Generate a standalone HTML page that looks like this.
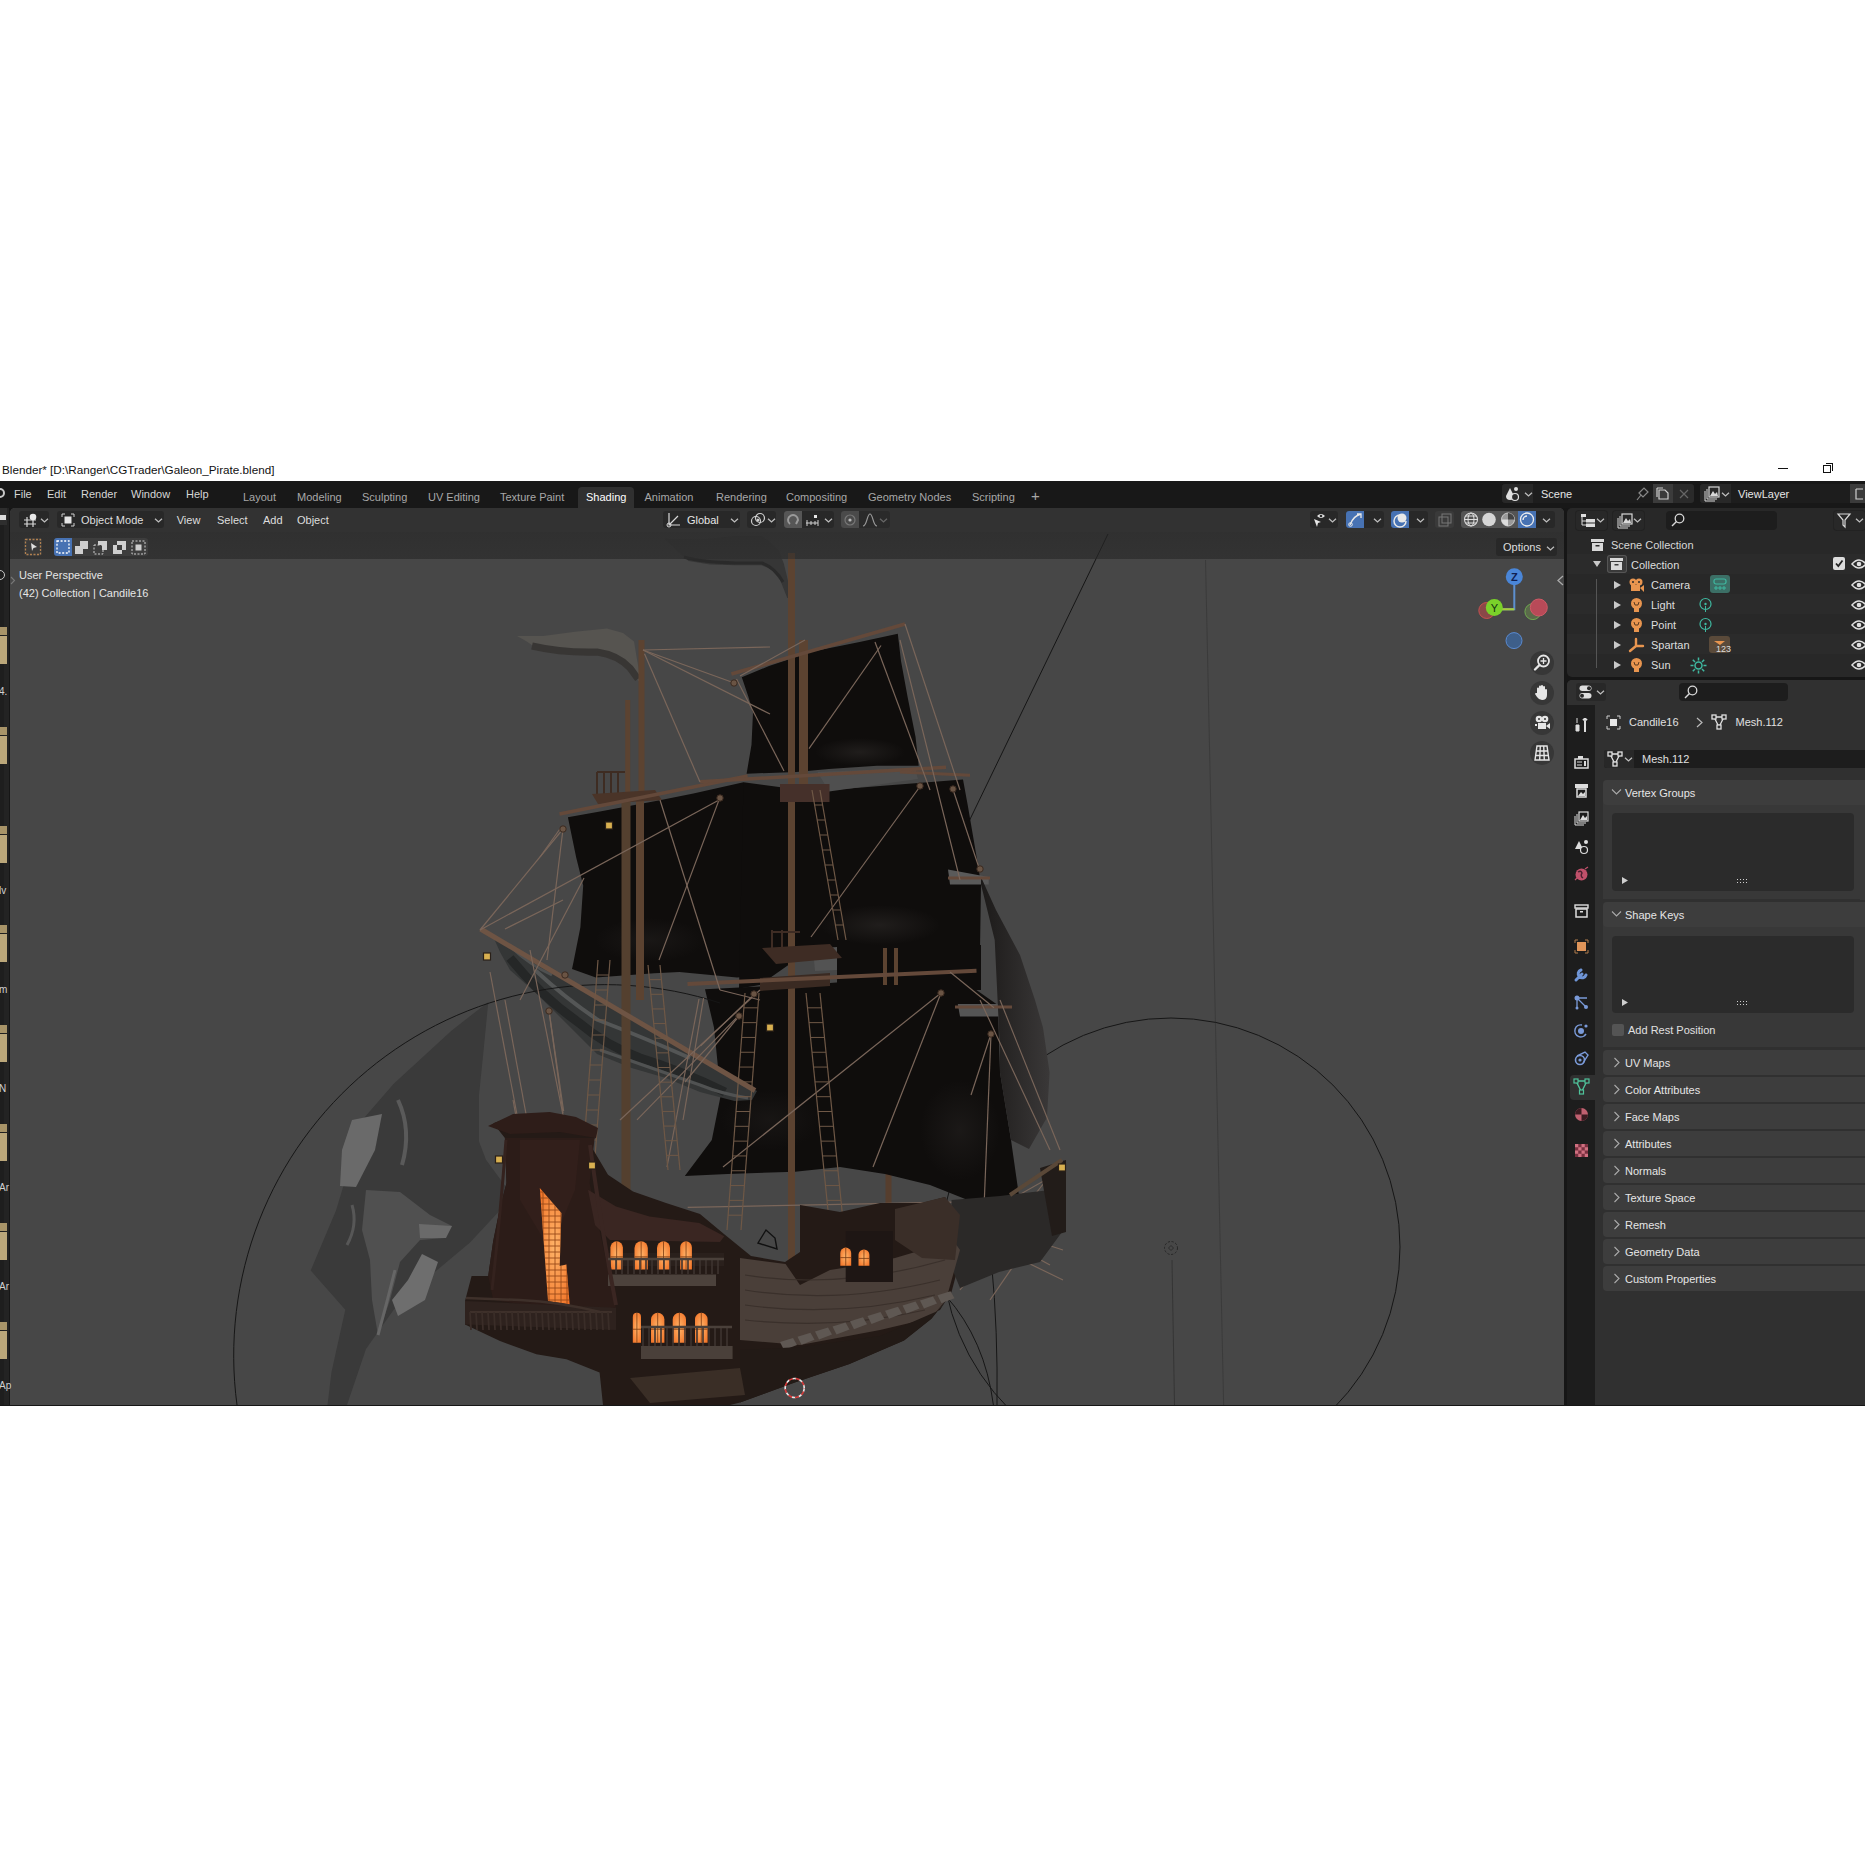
<!DOCTYPE html>
<html><head><meta charset="utf-8"><style>
html,body{margin:0;padding:0;}
body{width:1865px;height:1865px;background:#fff;position:relative;overflow:hidden;font-family:"Liberation Sans", sans-serif;}
.t{position:absolute;white-space:nowrap;line-height:1;font-family:"Liberation Sans", sans-serif;}
.b{position:absolute;box-sizing:border-box;}
svg{position:absolute;left:0;top:0;}
</style></head><body>
<div class="t" style="left:2px;top:463.70px;font-size:11.7px;color:#111;">Blender* [D:\Ranger\CGTrader\Galeon_Pirate.blend]</div>
<div class="b" style="left:1778px;top:467.5px;width:10px;height:1.5px;background:#111;"></div>
<div class="b" style="left:1823px;top:465px;width:8px;height:8px;border:1.2px solid #111;background:#fff"></div>
<div class="b" style="left:1826px;top:463px;width:7px;height:8px;border-top:1.2px solid #111;border-right:1.2px solid #111"></div>
<div class="b" style="left:0px;top:481px;width:1865px;height:925px;background:#161616;"></div>
<div class="b" style="left:0px;top:481px;width:1865px;height:27px;background:#181818;"></div>
<div class="t" style="left:14px;top:488.69px;font-size:11px;color:#d6d6d6;">File</div>
<div class="t" style="left:47px;top:488.69px;font-size:11px;color:#d6d6d6;">Edit</div>
<div class="t" style="left:81px;top:488.69px;font-size:11px;color:#d6d6d6;">Render</div>
<div class="t" style="left:131px;top:488.69px;font-size:11px;color:#d6d6d6;">Window</div>
<div class="t" style="left:186px;top:488.69px;font-size:11px;color:#d6d6d6;">Help</div>
<div class="b" style="left:578px;top:487px;width:56px;height:21px;background:#303030;border-radius:4px 4px 0 0"></div>
<div class="t" style="left:243px;top:492.19px;font-size:11px;color:#a8a8a8;">Layout</div>
<div class="t" style="left:297px;top:492.19px;font-size:11px;color:#a8a8a8;">Modeling</div>
<div class="t" style="left:362px;top:492.19px;font-size:11px;color:#a8a8a8;">Sculpting</div>
<div class="t" style="left:428px;top:492.19px;font-size:11px;color:#a8a8a8;">UV Editing</div>
<div class="t" style="left:500px;top:492.19px;font-size:11px;color:#a8a8a8;">Texture Paint</div>
<div class="t" style="left:586px;top:492.19px;font-size:11px;color:#ffffff;">Shading</div>
<div class="t" style="left:644.5px;top:492.19px;font-size:11px;color:#a8a8a8;">Animation</div>
<div class="t" style="left:716px;top:492.19px;font-size:11px;color:#a8a8a8;">Rendering</div>
<div class="t" style="left:786px;top:492.19px;font-size:11px;color:#a8a8a8;">Compositing</div>
<div class="t" style="left:868px;top:492.19px;font-size:11px;color:#a8a8a8;">Geometry Nodes</div>
<div class="t" style="left:972px;top:492.19px;font-size:11px;color:#a8a8a8;">Scripting</div>
<div class="t" style="left:1031px;top:488.30px;font-size:15px;color:#a8a8a8;">+</div>
<div class="b" style="left:10px;top:508px;width:1554px;height:897px;background:#474747;border-radius:5px 5px 0 0"></div>
<div class="b" style="left:10px;top:508px;width:1554px;height:24px;background:#323232;border-radius:5px 5px 0 0"></div>
<div class="b" style="left:10px;top:532px;width:1554px;height:27px;background:#3a3a3a;"></div>
<div class="b" style="left:0px;top:508px;width:9px;height:897px;background:#232323;"></div>
<div class="b" style="left:0px;top:508px;width:4px;height:897px;background:#1e1e1e;"></div>
<div class="b" style="left:0px;top:627px;width:7px;height:8px;background:#a89468;"></div>
<div class="b" style="left:0px;top:636px;width:7px;height:28px;background:#bba77a;"></div>
<div class="b" style="left:0px;top:727px;width:7px;height:8px;background:#a89468;"></div>
<div class="b" style="left:0px;top:736px;width:7px;height:28px;background:#bba77a;"></div>
<div class="b" style="left:0px;top:826px;width:7px;height:8px;background:#a89468;"></div>
<div class="b" style="left:0px;top:835px;width:7px;height:28px;background:#bba77a;"></div>
<div class="b" style="left:0px;top:925px;width:7px;height:8px;background:#a89468;"></div>
<div class="b" style="left:0px;top:934px;width:7px;height:28px;background:#bba77a;"></div>
<div class="b" style="left:0px;top:1025px;width:7px;height:8px;background:#a89468;"></div>
<div class="b" style="left:0px;top:1034px;width:7px;height:28px;background:#bba77a;"></div>
<div class="b" style="left:0px;top:1124px;width:7px;height:8px;background:#a89468;"></div>
<div class="b" style="left:0px;top:1133px;width:7px;height:28px;background:#bba77a;"></div>
<div class="b" style="left:0px;top:1223px;width:7px;height:8px;background:#a89468;"></div>
<div class="b" style="left:0px;top:1232px;width:7px;height:28px;background:#bba77a;"></div>
<div class="b" style="left:0px;top:1322px;width:7px;height:8px;background:#a89468;"></div>
<div class="b" style="left:0px;top:1331px;width:7px;height:28px;background:#bba77a;"></div>
<div class="t" style="left:-1px;top:686.54px;font-size:10px;color:#d0d0d0;">4.</div>
<div class="t" style="left:-1px;top:885.54px;font-size:10px;color:#d0d0d0;">lv</div>
<div class="t" style="left:-1px;top:984.54px;font-size:10px;color:#d0d0d0;">m</div>
<div class="t" style="left:-1px;top:1083.54px;font-size:10px;color:#d0d0d0;">N</div>
<div class="t" style="left:-1px;top:1182.54px;font-size:10px;color:#d0d0d0;">Ar</div>
<div class="t" style="left:-1px;top:1281.54px;font-size:10px;color:#d0d0d0;">Ar</div>
<div class="t" style="left:-1px;top:1380.54px;font-size:10px;color:#d0d0d0;">Ap</div>
<div class="b" style="left:0px;top:508px;width:7px;height:17px;background:#2e2e2e;"></div>
<div class="b" style="left:0px;top:515px;width:6px;height:5px;background:#dcdcdc;"></div>
<div class="b" style="left:-5px;top:488px;width:10px;height:10px;border:2px solid #c8c8c8;border-radius:50%"></div>
<div class="b" style="left:-5px;top:570px;width:10px;height:10px;border:1.5px solid #c8c8c8;border-radius:50%"></div>
<div class="b" style="left:19px;top:511px;width:30px;height:17px;background:#282828;border-radius:3px;"></div>
<svg style="left:22px;top:512px;" width="18" height="16" viewBox="0 0 18 16"><path d="M2 8 H14 M2 12 H14 M5 5 V15 M11 5 V15" stroke="#d8d8d8" stroke-width="1.2" fill="none"/><circle cx="11" cy="5" r="3.3" fill="#e8e8e8"/></svg>
<svg style="left:39.5px;top:516.5px" width="9" height="7" viewBox="0 0 9 7"><path d="M1 1.75 L4.5 4.8999999999999995 L8 1.75" fill="none" stroke="#bdbdbd" stroke-width="1.3"/></svg>
<div class="b" style="left:57px;top:511px;width:107px;height:17px;background:#282828;border-radius:3px;"></div>
<svg style="left:60px;top:512px;" width="16" height="16" viewBox="0 0 16 16"><path d="M2 5 V2 H5 M11 2 H14 V5 M14 11 V14 H11 M5 14 H2 V11" stroke="#cfcfcf" stroke-width="1" fill="none"/><rect x="4.5" y="4.5" width="7" height="7" fill="#e6e6e6"/></svg>
<div class="t" style="left:81px;top:514.69px;font-size:11px;color:#dedede;">Object Mode</div>
<svg style="left:153.5px;top:516.5px" width="9" height="7" viewBox="0 0 9 7"><path d="M1 1.75 L4.5 4.8999999999999995 L8 1.75" fill="none" stroke="#bdbdbd" stroke-width="1.3"/></svg>
<div class="t" style="left:176.7px;top:514.69px;font-size:11px;color:#dedede;">View</div>
<div class="t" style="left:217px;top:514.69px;font-size:11px;color:#dedede;">Select</div>
<div class="t" style="left:263px;top:514.69px;font-size:11px;color:#dedede;">Add</div>
<div class="t" style="left:297px;top:514.69px;font-size:11px;color:#dedede;">Object</div>
<div class="b" style="left:663px;top:511px;width:77px;height:17px;background:#282828;border-radius:3px;"></div>
<svg style="left:665px;top:511px;" width="18" height="18" viewBox="0 0 18 18"><path d="M4 2 V14 H15 M4 14 L13 5" stroke="#d8d8d8" stroke-width="1.2" fill="none"/><circle cx="4" cy="14" r="2" fill="none" stroke="#d8d8d8"/></svg>
<div class="t" style="left:687px;top:514.69px;font-size:11px;color:#e6e6e6;">Global</div>
<svg style="left:729.5px;top:516.5px" width="9" height="7" viewBox="0 0 9 7"><path d="M1 1.75 L4.5 4.8999999999999995 L8 1.75" fill="none" stroke="#bdbdbd" stroke-width="1.3"/></svg>
<div class="b" style="left:747px;top:511px;width:29px;height:17px;background:#282828;border-radius:3px;"></div>
<svg style="left:749px;top:512px;" width="18" height="16" viewBox="0 0 18 16"><circle cx="7" cy="9" r="4.5" fill="none" stroke="#d0d0d0" stroke-width="1.2"/><circle cx="11" cy="6" r="4.5" fill="none" stroke="#d0d0d0" stroke-width="1.2"/><circle cx="9" cy="8" r="1.5" fill="#d0d0d0"/></svg>
<svg style="left:766.5px;top:516.5px" width="9" height="7" viewBox="0 0 9 7"><path d="M1 1.75 L4.5 4.8999999999999995 L8 1.75" fill="none" stroke="#bdbdbd" stroke-width="1.3"/></svg>
<div class="b" style="left:784px;top:511px;width:50px;height:17px;background:#282828;border-radius:3px;"></div>
<div class="b" style="left:784px;top:511px;width:18px;height:17px;background:#565656;border-radius:3px 0 0 3px"></div>
<svg style="left:786px;top:512px;" width="16" height="16" viewBox="0 0 16 16"><path d="M4 12 A5 5 0 1 1 12 8 L10 12" fill="none" stroke="#9a9a9a" stroke-width="2"/></svg>
<svg style="left:804px;top:512px;" width="20" height="16" viewBox="0 0 20 16"><path d="M2 11 H14 M3 8 V14 M7 9 V13 M11 9 V13 M14 8 V14" stroke="#cfcfcf" stroke-width="1" fill="none"/><rect x="10" y="3" width="3" height="3" fill="#e8e8e8"/></svg>
<svg style="left:823.5px;top:516.5px" width="9" height="7" viewBox="0 0 9 7"><path d="M1 1.75 L4.5 4.8999999999999995 L8 1.75" fill="none" stroke="#bdbdbd" stroke-width="1.3"/></svg>
<div class="b" style="left:841px;top:511px;width:49px;height:17px;background:#2a2a2a;border-radius:3px;"></div>
<div class="b" style="left:841px;top:511px;width:18px;height:17px;background:#4a4a4a;border-radius:3px 0 0 3px"></div>
<svg style="left:843px;top:512px;" width="16" height="16" viewBox="0 0 16 16"><circle cx="7" cy="8" r="5" fill="none" stroke="#777" stroke-width="1.2"/><circle cx="7" cy="8" r="1.6" fill="#bbb"/></svg>
<svg style="left:862px;top:512px;" width="16" height="16" viewBox="0 0 16 16"><path d="M1 14 C5 14 5 2 8 2 C11 2 11 14 15 14" fill="none" stroke="#999" stroke-width="1.2"/></svg>
<svg style="left:878.5px;top:516.5px" width="9" height="7" viewBox="0 0 9 7"><path d="M1 1.75 L4.5 4.8999999999999995 L8 1.75" fill="none" stroke="#666" stroke-width="1.3"/></svg>
<div class="b" style="left:1310px;top:511px;width:28px;height:17px;background:#282828;border-radius:3px;"></div>
<svg style="left:1311px;top:511px;" width="18" height="18" viewBox="0 0 18 18"><path d="M6 5 Q10 1 14 5 Q10 9 6 5Z" fill="#e6e6e6"/><circle cx="10" cy="5" r="1.3" fill="#282828"/><path d="M3 8 L10 11 L7 12 L6 16Z" fill="#e6e6e6"/></svg>
<svg style="left:1327.5px;top:516.5px" width="9" height="7" viewBox="0 0 9 7"><path d="M1 1.75 L4.5 4.8999999999999995 L8 1.75" fill="none" stroke="#bdbdbd" stroke-width="1.3"/></svg>
<div class="b" style="left:1346px;top:511px;width:38px;height:17px;background:#282828;border-radius:3px;"></div>
<div class="b" style="left:1346px;top:511px;width:18px;height:17px;background:#4772b3;border-radius:3px 0 0 3px"></div>
<svg style="left:1347px;top:511px;" width="17" height="17" viewBox="0 0 17 17"><path d="M3 14 Q6 5 14 3 M10 3 H14 V7" fill="none" stroke="#e8e8e8" stroke-width="1.3"/><circle cx="3.5" cy="13.5" r="1.8" fill="none" stroke="#e8e8e8"/></svg>
<svg style="left:1372.5px;top:516.5px" width="9" height="7" viewBox="0 0 9 7"><path d="M1 1.75 L4.5 4.8999999999999995 L8 1.75" fill="none" stroke="#bdbdbd" stroke-width="1.3"/></svg>
<div class="b" style="left:1391px;top:511px;width:37px;height:17px;background:#282828;border-radius:3px;"></div>
<div class="b" style="left:1391px;top:511px;width:18px;height:17px;background:#4772b3;border-radius:3px 0 0 3px"></div>
<svg style="left:1392px;top:511px;" width="17" height="17" viewBox="0 0 17 17"><circle cx="10" cy="7" r="4.5" fill="#e8e8e8"/><path d="M8 4 A6 6 0 1 0 14 10" fill="none" stroke="#e8e8e8" stroke-width="1.5"/></svg>
<svg style="left:1415.5px;top:516.5px" width="9" height="7" viewBox="0 0 9 7"><path d="M1 1.75 L4.5 4.8999999999999995 L8 1.75" fill="none" stroke="#bdbdbd" stroke-width="1.3"/></svg>
<div class="b" style="left:1435px;top:511px;width:19px;height:17px;background:#3a3a3a;border-radius:3px;"></div>
<svg style="left:1437px;top:512px;" width="16" height="16" viewBox="0 0 16 16"><rect x="2" y="5" width="9" height="9" fill="none" stroke="#777"/><rect x="5" y="2" width="9" height="9" fill="none" stroke="#777"/></svg>
<div class="b" style="left:1461px;top:511px;width:94px;height:17px;background:#282828;border-radius:3px;"></div>
<div class="b" style="left:1461px;top:511px;width:57px;height:17px;background:#545454;border-radius:3px 0 0 3px"></div>
<div class="b" style="left:1518px;top:511px;width:18px;height:17px;background:#4772b3;"></div>
<svg style="left:1462px;top:511px;" width="18" height="17" viewBox="0 0 18 17"><circle cx="9" cy="8.5" r="6.5" fill="none" stroke="#ddd" stroke-width="1.1"/><ellipse cx="9" cy="8.5" rx="3" ry="6.5" fill="none" stroke="#ddd" stroke-width="1"/><path d="M2.5 8.5 H15.5 M3.5 5 H14.5 M3.5 12 H14.5" stroke="#ddd" stroke-width="1"/></svg>
<svg style="left:1480px;top:511px;" width="18" height="17" viewBox="0 0 18 17"><circle cx="9" cy="8.5" r="6.8" fill="#d6d6d6"/></svg>
<svg style="left:1499px;top:511px;" width="18" height="17" viewBox="0 0 18 17"><circle cx="9" cy="8.5" r="6.5" fill="#999" stroke="#ccc"/><path d="M9 2 A6.5 6.5 0 0 1 15.5 8.5 H9Z" fill="#444"/><path d="M9 8.5 V15 A6.5 6.5 0 0 1 2.5 8.5Z" fill="#ddd"/></svg>
<svg style="left:1518px;top:511px;" width="18" height="17" viewBox="0 0 18 17"><circle cx="9" cy="8.5" r="6.5" fill="none" stroke="#eee" stroke-width="1.3"/><path d="M5 9 A4 4 0 0 1 9 5" fill="none" stroke="#eee" stroke-width="1.3"/></svg>
<svg style="left:1541.5px;top:516.5px" width="9" height="7" viewBox="0 0 9 7"><path d="M1 1.75 L4.5 4.8999999999999995 L8 1.75" fill="none" stroke="#bdbdbd" stroke-width="1.3"/></svg>
<svg style="left:0px;top:0px;" width="1865" height="1865" viewBox="0 0 1865 1865"><defs><clipPath id="vp"><rect x="10" y="532" width="1554" height="873"/></clipPath><linearGradient id="sailg" x1="0" y1="0" x2="0" y2="1"><stop offset="0" stop-color="#100e0d"/><stop offset="0.7" stop-color="#0d0b0a"/><stop offset="1" stop-color="#1a1716"/></linearGradient><radialGradient id="win" cx="0.5" cy="0.5" r="0.75"><stop offset="0" stop-color="#ffb56a"/><stop offset="1" stop-color="#f06a1e"/></radialGradient><linearGradient id="flagg" x1="0" y1="0" x2="0" y2="1"><stop offset="0" stop-color="#4a4a4a"/><stop offset="0.55" stop-color="#3e3e3e"/><stop offset="1" stop-color="#2c2c2c"/></linearGradient><linearGradient id="lat" x1="0" y1="0" x2="1" y2="0"><stop offset="0" stop-color="#1c1a19"/><stop offset="1" stop-color="#3a3838"/></linearGradient></defs><g clip-path="url(#vp)"><line x1="1205.5" y1="560" x2="1223.7" y2="1408" stroke="#3b3b3b" stroke-width="1" /><circle cx="1171" cy="1247" r="229" fill="none" stroke="#161616" stroke-width="1"/><line x1="1108" y1="534" x2="960" y2="840" stroke="#161616" stroke-width="1" /><circle cx="1171" cy="1248" r="6.5" fill="none" stroke="#262626" stroke-width="1" stroke-dasharray="2.2 1.6"/><path d="M1168.5 1248 L1171 1245.5 L1173.5 1248 L1171 1250.5Z" fill="none" stroke="#262626" stroke-width="0.8" /><line x1="1172" y1="1260" x2="1174.5" y2="1405" stroke="#353535" stroke-width="1" /><path d="M946 1296 Q985 1340 993.4 1405" fill="none" stroke="#161616" stroke-width="1" /><path d="M991.6 1264 Q998 1330 997 1405" fill="none" stroke="#161616" stroke-width="1" /><polygon points="664.6,538.7 701.5,539.6 735.8,536.0 761.5,536.0 770.0,542.0 778.7,550.7 783.8,563.6 789.0,585.0 790.7,598.0 787.3,598.0 780.4,580.8 771.8,569.6 761.5,565.3 735.8,565.3 710.0,564.5 688.6,561.0 680.0,553.3" fill="#363636" /><path d="M684 557 Q700 562 735 563 L762 563 Q775 568 783 582" fill="none" stroke="#2a2a2a" stroke-width="3" /><polygon points="517.0,636.0 543.0,636.0 575.0,631.8 607.0,628.6 623.0,632.9 634.0,641.4 639.4,673.6 641.5,682.0 638.3,681.0 628.7,665.0 618.0,655.4 596.5,653.2 564.3,654.3 537.5,649.0 526.8,641.4" fill="#565450" /><path d="M532 646 Q562 653 597 652 Q618 655 630 668 L638 679" fill="none" stroke="#383634" stroke-width="7" /><polygon points="488.3,1001.9 483.7,1049.2 479.0,1095.3 479.0,1141.4 486.0,1159.8 511.3,1194.4 497.5,1212.9 469.8,1242.8 428.3,1277.4 393.7,1309.7 366.0,1348.9 345.3,1410.0 326.9,1410.0 331.5,1372.0 345.3,1309.7 310.7,1270.5 336.0,1210.5 363.8,1118.3 393.7,1083.7 451.4,1030.7" fill="#3a3a3a" /><polygon points="352.0,1120.0 382.0,1114.0 375.0,1150.0 356.0,1187.0 340.0,1186.0 342.0,1150.0" fill="#6a6a6a" /><polygon points="422.0,1254.0 438.0,1262.0 425.0,1300.0 398.0,1316.0 392.0,1300.0 408.0,1280.0" fill="#6e6e6e" /><polygon points="366.0,1190.0 400.0,1192.0 430.0,1215.0 452.0,1226.0 445.0,1238.0 420.0,1240.0 400.0,1262.0 390.0,1300.0 378.0,1335.0 372.0,1300.0 370.0,1260.0 362.0,1230.0" fill="#505050" /><polygon points="419.0,1224.0 452.0,1226.0 446.0,1238.0 420.0,1238.0" fill="#6a6a6a" /><path d="M398 1100 Q412 1130 402 1165" fill="none" stroke="#5a5a5a" stroke-width="4" /><path d="M352 1205 Q358 1225 347 1245" fill="none" stroke="#575757" stroke-width="3" /><path d="M395 1270 Q385 1310 378 1335" fill="none" stroke="#666" stroke-width="3" /><polygon points="741.8,677.2 769.0,666.0 812.6,651.5 860.8,641.8 897.8,633.8 901.0,661.0 907.5,696.5 915.5,736.7 918.7,765.7 877.0,765.7 828.7,769.0 796.5,772.0 746.6,773.7 751.5,744.8 753.0,712.6 748.3,696.5" fill="#0f0d0c" /><polygon points="567.9,817.2 600.0,811.6 658.5,800.4 693.4,793.5 743.5,782.3 760.0,800.0 760.0,976.0 737.0,977.5 679.4,972.0 654.3,973.3 595.8,977.5 572.0,969.0 573.5,962.1 580.4,927.3 583.2,885.5 576.2,857.6" fill="#0f0d0c" /><polygon points="743.5,782.3 813.0,791.5 880.0,786.0 963.0,779.5 967.7,805.0 978.0,865.0 981.0,884.6 979.7,970.0 957.0,955.0 900.0,950.0 837.0,949.0 813.0,947.7 760.0,985.0 739.0,988.6" fill="#0f0d0c" /><line x1="888.5" y1="1000" x2="888.5" y2="1218" stroke="#563e2e" stroke-width="6" /><polygon points="705.0,989.3 830.0,983.0 952.8,973.5 997.8,1005.0 1000.0,1072.6 1011.0,1140.0 1020.0,1203.0 975.3,1203.0 930.0,1185.0 885.0,1174.0 840.0,1167.0 795.0,1171.7 727.6,1174.0 684.8,1176.0 711.8,1140.0 720.8,1095.0 714.0,1027.6" fill="#0f0d0c" /><polygon points="837.0,945.0 981.0,945.0 981.0,990.0 837.0,990.0" fill="#0f0d0c" /><defs><radialGradient id="sheen" cx="0.5" cy="0.5" r="0.5"><stop offset="0" stop-color="#3a3634" stop-opacity="0.4"/><stop offset="1" stop-color="#3a3634" stop-opacity="0"/></radialGradient></defs><ellipse cx="860" cy="752" rx="45" ry="14" fill="url(#sheen)"/><ellipse cx="880" cy="925" rx="60" ry="20" fill="url(#sheen)"/><ellipse cx="650" cy="940" rx="55" ry="22" fill="url(#sheen)" opacity="0.6"/><ellipse cx="960" cy="1130" rx="40" ry="50" fill="url(#sheen)" opacity="0.7"/><ellipse cx="770" cy="1120" rx="50" ry="30" fill="url(#sheen)" opacity="0.5"/><polygon points="817.5,772.0 915.0,768.0 918.0,779.0 829.0,791.5" fill="#4f4f4f" /><polygon points="813.0,949.0 837.0,947.0 837.0,970.0 815.0,971.0" fill="#535353" /><polygon points="948.0,869.6 988.7,877.0 988.7,884.6 950.0,884.6" fill="#5a5a5a" /><polygon points="957.8,1004.0 1008.0,1004.0 1010.7,1016.5 960.0,1016.5" fill="#555555" /><polygon points="981.0,877.0 996.0,910.0 1020.0,955.0 1035.0,1000.0 1043.0,1027.6 1049.6,1072.6 1047.0,1117.6 1029.0,1149.0 1011.0,1140.0 1000.0,1072.6 1000.0,1050.0 994.7,940.0 981.0,884.6" fill="url(#lat)" /><polygon points="492.0,934.0 560.0,974.0 620.0,1010.0 680.0,1046.0 757.0,1091.0 752.0,1100.0 734.5,1101.0 700.0,1092.0 666.0,1078.0 631.6,1068.0 597.0,1054.0 563.0,1020.0 537.0,994.0 510.0,970.0 500.0,952.0" fill="#343636" /><path d="M510 958 Q540 995 578 1022 Q605 1045 640 1058 Q680 1070 725 1092" fill="none" stroke="#252727" stroke-width="9" /><path d="M535 970 Q565 998 598 1020 Q640 1036 690 1058" fill="none" stroke="#545656" stroke-width="4" /><path d="M600 1050 Q640 1064 700 1085 Q722 1094 748 1098" fill="none" stroke="#505252" stroke-width="3" /><path d="M512 948 Q530 965 552 975" fill="none" stroke="#4e5050" stroke-width="3" /><path d="M237 1405 A371 371 0 0 1 720 1003" fill="none" stroke="#161616" stroke-width="1" /><line x1="791.5" y1="553" x2="791.5" y2="1264" stroke="#5c4331" stroke-width="7" /><line x1="803.5" y1="640" x2="803.5" y2="790" stroke="#5c4331" stroke-width="9" /><line x1="641.5" y1="640" x2="641.5" y2="800" stroke="#5c4331" stroke-width="6" /><line x1="627.7" y1="700" x2="627.7" y2="800" stroke="#5c4331" stroke-width="5" /><line x1="626" y1="800" x2="626" y2="1250" stroke="#54402f" stroke-width="9" /><line x1="640" y1="800" x2="640" y2="1000" stroke="#5c4331" stroke-width="8" /><line x1="885" y1="948" x2="885" y2="985" stroke="#5c4331" stroke-width="4" /><line x1="896" y1="948" x2="896" y2="985" stroke="#5c4331" stroke-width="4" /><path d="M597 772 H625 M597 772 V796 M604 772 V796 M611 772 V796 M618 772 V796" fill="none" stroke="#3e2c22" stroke-width="2" /><polygon points="592.0,794.0 655.0,790.0 662.0,800.0 598.0,804.0" fill="#4a3428" /><polygon points="780.0,784.0 829.5,784.0 829.5,802.0 780.0,802.0" fill="#45302a" /><polygon points="762.0,948.0 830.0,944.0 842.0,958.0 776.0,964.0" fill="#3e2c24" /><path d="M772 930 V950 M782 930 V950 M772 932 H800" fill="none" stroke="#3e2c24" stroke-width="2" /><polygon points="760.0,978.0 830.0,973.0 830.0,986.0 760.0,991.0" fill="#3a2a22" /><line x1="731.4" y1="674" x2="905" y2="624" stroke="#64493a" stroke-width="3.5" /><line x1="559.5" y1="814" x2="747.6" y2="776" stroke="#64493a" stroke-width="3.5" /><line x1="700" y1="781.8" x2="946" y2="767.3" stroke="#64493a" stroke-width="3.5" /><line x1="900" y1="772" x2="970" y2="775.3" stroke="#64493a" stroke-width="3" /><line x1="687.5" y1="984" x2="976.5" y2="970.8" stroke="#64493a" stroke-width="4" /><line x1="480.6" y1="929" x2="755" y2="1090.5" stroke="#6e5444" stroke-width="5" /><line x1="948" y1="878" x2="990" y2="878" stroke="#64493a" stroke-width="3" /><line x1="955" y1="1007" x2="1012" y2="1007" stroke="#64493a" stroke-width="3" /><line x1="643" y1="650" x2="734.3" y2="683" stroke="#7a665a" stroke-width="1.2" /><line x1="643" y1="650" x2="770" y2="647" stroke="#7a665a" stroke-width="1.2" /><line x1="643" y1="650" x2="770" y2="714" stroke="#7a665a" stroke-width="1.2" /><line x1="644.5" y1="653.8" x2="700" y2="782" stroke="#7a665a" stroke-width="1.2" /><line x1="881" y1="645.5" x2="809" y2="748.6" stroke="#7a665a" stroke-width="1.2" /><line x1="736.5" y1="679" x2="784" y2="771" stroke="#7a665a" stroke-width="1.2" /><line x1="719" y1="800" x2="659" y2="960" stroke="#7a665a" stroke-width="1.2" /><line x1="920" y1="786.5" x2="811" y2="937" stroke="#7a665a" stroke-width="1.2" /><line x1="953" y1="789.5" x2="979.4" y2="869" stroke="#7a665a" stroke-width="1.2" /><line x1="941" y1="993" x2="723" y2="1167" stroke="#7a665a" stroke-width="1.2" /><line x1="941" y1="993" x2="873" y2="1167" stroke="#7a665a" stroke-width="1.2" /><line x1="950" y1="972" x2="994" y2="1007.7" stroke="#7a665a" stroke-width="1.2" /><line x1="560.6" y1="828" x2="540" y2="857" stroke="#7a665a" stroke-width="1.2" /><line x1="549" y1="1010.7" x2="563.6" y2="1111" stroke="#7a665a" stroke-width="1.2" /><line x1="737.6" y1="1016.6" x2="637" y2="1119.8" stroke="#7a665a" stroke-width="1.2" /><line x1="699" y1="999" x2="667" y2="1167" stroke="#7a665a" stroke-width="1.2" /><line x1="687.7" y1="1207.4" x2="1062.8" y2="1200" stroke="#7a665a" stroke-width="1.2" /><line x1="563" y1="829" x2="547" y2="960" stroke="#7a665a" stroke-width="1.2" /><line x1="530" y1="950" x2="600" y2="1300" stroke="#7a665a" stroke-width="1.2" /><line x1="1010" y1="1200" x2="1063" y2="1170" stroke="#7a665a" stroke-width="1.2" /><line x1="513" y1="1100" x2="553" y2="1314" stroke="#7a665a" stroke-width="1.2" /><line x1="505" y1="1000" x2="540" y2="1190" stroke="#7a665a" stroke-width="1.2" /><line x1="955" y1="1230" x2="1063" y2="1230" stroke="#7a665a" stroke-width="1.2" /><line x1="1005" y1="1270" x2="1060" y2="1195" stroke="#7a665a" stroke-width="1.2" /><line x1="940" y1="1205" x2="1050" y2="1265" stroke="#7a665a" stroke-width="1.2" /><line x1="875" y1="642" x2="930" y2="790" stroke="#7a665a" stroke-width="1.2" /><line x1="584" y1="878" x2="520" y2="1000" stroke="#7a665a" stroke-width="1.2" /><line x1="600" y1="1295" x2="700" y2="1215" stroke="#7a665a" stroke-width="1.2" /><line x1="980" y1="1000" x2="1050" y2="1150" stroke="#7a665a" stroke-width="1.2" /><line x1="720" y1="990" x2="760" y2="1000" stroke="#7a665a" stroke-width="1.2" /><line x1="480" y1="930" x2="563" y2="829" stroke="#7a665a" stroke-width="1.2" /><line x1="480" y1="930" x2="719" y2="800" stroke="#7a665a" stroke-width="1.2" /><line x1="490" y1="972" x2="518" y2="1120" stroke="#7a665a" stroke-width="1.2" /><line x1="549" y1="1011" x2="563" y2="1113" stroke="#7a665a" stroke-width="1.2" /><line x1="563" y1="900" x2="505" y2="929" stroke="#7a665a" stroke-width="1.2" /><line x1="703.6" y1="998" x2="683" y2="1120" stroke="#7a665a" stroke-width="1.2" /><line x1="660" y1="800" x2="720" y2="990" stroke="#7a665a" stroke-width="1.2" /><line x1="760" y1="990" x2="620" y2="1120" stroke="#7a665a" stroke-width="1.2" /><line x1="991" y1="1034" x2="984" y2="1208" stroke="#7a665a" stroke-width="1.2" /><line x1="991" y1="1034" x2="971" y2="1095" stroke="#7a665a" stroke-width="1.2" /><line x1="754.6" y1="994" x2="700.5" y2="1046" stroke="#7a665a" stroke-width="1.2" /><line x1="739" y1="1016" x2="685" y2="1082" stroke="#7a665a" stroke-width="1.2" /><line x1="900" y1="640" x2="960" y2="880" stroke="#7a665a" stroke-width="1.2" /><line x1="805" y1="640" x2="740" y2="676" stroke="#7a665a" stroke-width="1.2" /><line x1="905" y1="624" x2="960" y2="790" stroke="#7a665a" stroke-width="1.2" /><line x1="1000" y1="1000" x2="1060" y2="1150" stroke="#7a665a" stroke-width="1.2" /><line x1="1062" y1="1160" x2="960" y2="1290" stroke="#7a665a" stroke-width="1.2" /><line x1="1062" y1="1195" x2="990" y2="1300" stroke="#7a665a" stroke-width="1.2" /><line x1="960" y1="1230" x2="1063" y2="1280" stroke="#7a665a" stroke-width="1.2" /><line x1="940" y1="1210" x2="1063" y2="1250" stroke="#7a665a" stroke-width="1.2" /><line x1="598" y1="960" x2="582" y2="1170" stroke="#6f5846" stroke-width="1.2" /><line x1="610" y1="960" x2="594" y2="1170" stroke="#6f5846" stroke-width="1.2" /><line x1="596.8571428571429" y1="975.0" x2="608.8571428571429" y2="975.0" stroke="#6f5846" stroke-width="1" /><line x1="595.7142857142857" y1="990.0" x2="607.7142857142857" y2="990.0" stroke="#6f5846" stroke-width="1" /><line x1="594.5714285714286" y1="1005.0" x2="606.5714285714286" y2="1005.0" stroke="#6f5846" stroke-width="1" /><line x1="593.4285714285714" y1="1020.0" x2="605.4285714285714" y2="1020.0" stroke="#6f5846" stroke-width="1" /><line x1="592.2857142857143" y1="1035.0" x2="604.2857142857143" y2="1035.0" stroke="#6f5846" stroke-width="1" /><line x1="591.1428571428571" y1="1050.0" x2="603.1428571428571" y2="1050.0" stroke="#6f5846" stroke-width="1" /><line x1="590.0" y1="1065.0" x2="602.0" y2="1065.0" stroke="#6f5846" stroke-width="1" /><line x1="588.8571428571429" y1="1080.0" x2="600.8571428571429" y2="1080.0" stroke="#6f5846" stroke-width="1" /><line x1="587.7142857142857" y1="1095.0" x2="599.7142857142857" y2="1095.0" stroke="#6f5846" stroke-width="1" /><line x1="586.5714285714286" y1="1110.0" x2="598.5714285714286" y2="1110.0" stroke="#6f5846" stroke-width="1" /><line x1="585.4285714285714" y1="1125.0" x2="597.4285714285714" y2="1125.0" stroke="#6f5846" stroke-width="1" /><line x1="584.2857142857143" y1="1140.0" x2="596.2857142857143" y2="1140.0" stroke="#6f5846" stroke-width="1" /><line x1="583.1428571428571" y1="1155.0" x2="595.1428571428571" y2="1155.0" stroke="#6f5846" stroke-width="1" /><line x1="648" y1="965" x2="668" y2="1170" stroke="#6f5846" stroke-width="1.2" /><line x1="660" y1="965" x2="680" y2="1170" stroke="#6f5846" stroke-width="1.2" /><line x1="649.4285714285714" y1="979.6428571428571" x2="661.4285714285714" y2="979.6428571428571" stroke="#6f5846" stroke-width="1" /><line x1="650.8571428571429" y1="994.2857142857143" x2="662.8571428571429" y2="994.2857142857143" stroke="#6f5846" stroke-width="1" /><line x1="652.2857142857143" y1="1008.9285714285714" x2="664.2857142857143" y2="1008.9285714285714" stroke="#6f5846" stroke-width="1" /><line x1="653.7142857142857" y1="1023.5714285714286" x2="665.7142857142857" y2="1023.5714285714286" stroke="#6f5846" stroke-width="1" /><line x1="655.1428571428571" y1="1038.2142857142858" x2="667.1428571428571" y2="1038.2142857142858" stroke="#6f5846" stroke-width="1" /><line x1="656.5714285714286" y1="1052.857142857143" x2="668.5714285714286" y2="1052.857142857143" stroke="#6f5846" stroke-width="1" /><line x1="658.0" y1="1067.5" x2="670.0" y2="1067.5" stroke="#6f5846" stroke-width="1" /><line x1="659.4285714285714" y1="1082.142857142857" x2="671.4285714285714" y2="1082.142857142857" stroke="#6f5846" stroke-width="1" /><line x1="660.8571428571429" y1="1096.7857142857142" x2="672.8571428571429" y2="1096.7857142857142" stroke="#6f5846" stroke-width="1" /><line x1="662.2857142857143" y1="1111.4285714285716" x2="674.2857142857143" y2="1111.4285714285716" stroke="#6f5846" stroke-width="1" /><line x1="663.7142857142857" y1="1126.0714285714284" x2="675.7142857142857" y2="1126.0714285714284" stroke="#6f5846" stroke-width="1" /><line x1="665.1428571428571" y1="1140.7142857142858" x2="677.1428571428571" y2="1140.7142857142858" stroke="#6f5846" stroke-width="1" /><line x1="666.5714285714286" y1="1155.357142857143" x2="678.5714285714286" y2="1155.357142857143" stroke="#6f5846" stroke-width="1" /><line x1="745" y1="993" x2="727" y2="1230" stroke="#6f5846" stroke-width="1.2" /><line x1="759" y1="993" x2="741" y2="1230" stroke="#6f5846" stroke-width="1.2" /><line x1="743.875" y1="1007.8125" x2="757.875" y2="1007.8125" stroke="#6f5846" stroke-width="1" /><line x1="742.75" y1="1022.625" x2="756.75" y2="1022.625" stroke="#6f5846" stroke-width="1" /><line x1="741.625" y1="1037.4375" x2="755.625" y2="1037.4375" stroke="#6f5846" stroke-width="1" /><line x1="740.5" y1="1052.25" x2="754.5" y2="1052.25" stroke="#6f5846" stroke-width="1" /><line x1="739.375" y1="1067.0625" x2="753.375" y2="1067.0625" stroke="#6f5846" stroke-width="1" /><line x1="738.25" y1="1081.875" x2="752.25" y2="1081.875" stroke="#6f5846" stroke-width="1" /><line x1="737.125" y1="1096.6875" x2="751.125" y2="1096.6875" stroke="#6f5846" stroke-width="1" /><line x1="736.0" y1="1111.5" x2="750.0" y2="1111.5" stroke="#6f5846" stroke-width="1" /><line x1="734.875" y1="1126.3125" x2="748.875" y2="1126.3125" stroke="#6f5846" stroke-width="1" /><line x1="733.75" y1="1141.125" x2="747.75" y2="1141.125" stroke="#6f5846" stroke-width="1" /><line x1="732.625" y1="1155.9375" x2="746.625" y2="1155.9375" stroke="#6f5846" stroke-width="1" /><line x1="731.5" y1="1170.75" x2="745.5" y2="1170.75" stroke="#6f5846" stroke-width="1" /><line x1="730.375" y1="1185.5625" x2="744.375" y2="1185.5625" stroke="#6f5846" stroke-width="1" /><line x1="729.25" y1="1200.375" x2="743.25" y2="1200.375" stroke="#6f5846" stroke-width="1" /><line x1="728.125" y1="1215.1875" x2="742.125" y2="1215.1875" stroke="#6f5846" stroke-width="1" /><line x1="806" y1="993" x2="830" y2="1230" stroke="#6f5846" stroke-width="1.2" /><line x1="820" y1="993" x2="844" y2="1230" stroke="#6f5846" stroke-width="1.2" /><line x1="807.5" y1="1007.8125" x2="821.5" y2="1007.8125" stroke="#6f5846" stroke-width="1" /><line x1="809.0" y1="1022.625" x2="823.0" y2="1022.625" stroke="#6f5846" stroke-width="1" /><line x1="810.5" y1="1037.4375" x2="824.5" y2="1037.4375" stroke="#6f5846" stroke-width="1" /><line x1="812.0" y1="1052.25" x2="826.0" y2="1052.25" stroke="#6f5846" stroke-width="1" /><line x1="813.5" y1="1067.0625" x2="827.5" y2="1067.0625" stroke="#6f5846" stroke-width="1" /><line x1="815.0" y1="1081.875" x2="829.0" y2="1081.875" stroke="#6f5846" stroke-width="1" /><line x1="816.5" y1="1096.6875" x2="830.5" y2="1096.6875" stroke="#6f5846" stroke-width="1" /><line x1="818.0" y1="1111.5" x2="832.0" y2="1111.5" stroke="#6f5846" stroke-width="1" /><line x1="819.5" y1="1126.3125" x2="833.5" y2="1126.3125" stroke="#6f5846" stroke-width="1" /><line x1="821.0" y1="1141.125" x2="835.0" y2="1141.125" stroke="#6f5846" stroke-width="1" /><line x1="822.5" y1="1155.9375" x2="836.5" y2="1155.9375" stroke="#6f5846" stroke-width="1" /><line x1="824.0" y1="1170.75" x2="838.0" y2="1170.75" stroke="#6f5846" stroke-width="1" /><line x1="825.5" y1="1185.5625" x2="839.5" y2="1185.5625" stroke="#6f5846" stroke-width="1" /><line x1="827.0" y1="1200.375" x2="841.0" y2="1200.375" stroke="#6f5846" stroke-width="1" /><line x1="828.5" y1="1215.1875" x2="842.5" y2="1215.1875" stroke="#6f5846" stroke-width="1" /><line x1="812" y1="790" x2="838" y2="940" stroke="#6f5846" stroke-width="1.2" /><line x1="820" y1="790" x2="846" y2="940" stroke="#6f5846" stroke-width="1.2" /><line x1="814.6" y1="805.0" x2="822.6" y2="805.0" stroke="#6f5846" stroke-width="1" /><line x1="817.2" y1="820.0" x2="825.2" y2="820.0" stroke="#6f5846" stroke-width="1" /><line x1="819.8" y1="835.0" x2="827.8" y2="835.0" stroke="#6f5846" stroke-width="1" /><line x1="822.4" y1="850.0" x2="830.4" y2="850.0" stroke="#6f5846" stroke-width="1" /><line x1="825.0" y1="865.0" x2="833.0" y2="865.0" stroke="#6f5846" stroke-width="1" /><line x1="827.6" y1="880.0" x2="835.6" y2="880.0" stroke="#6f5846" stroke-width="1" /><line x1="830.2" y1="895.0" x2="838.2" y2="895.0" stroke="#6f5846" stroke-width="1" /><line x1="832.8" y1="910.0" x2="840.8" y2="910.0" stroke="#6f5846" stroke-width="1" /><line x1="835.4" y1="925.0" x2="843.4" y2="925.0" stroke="#6f5846" stroke-width="1" /><circle cx="720" cy="798" r="3.2" fill="#6a5444" stroke="#3a2a20" stroke-width="1"/><circle cx="941" cy="993" r="3.2" fill="#6a5444" stroke="#3a2a20" stroke-width="1"/><circle cx="953" cy="789" r="3.2" fill="#6a5444" stroke="#3a2a20" stroke-width="1"/><circle cx="920" cy="786" r="3.2" fill="#6a5444" stroke="#3a2a20" stroke-width="1"/><circle cx="563" cy="829" r="3.2" fill="#6a5444" stroke="#3a2a20" stroke-width="1"/><circle cx="549" cy="1011" r="3.2" fill="#6a5444" stroke="#3a2a20" stroke-width="1"/><circle cx="739" cy="1016" r="3.2" fill="#6a5444" stroke="#3a2a20" stroke-width="1"/><circle cx="754" cy="994" r="3.2" fill="#6a5444" stroke="#3a2a20" stroke-width="1"/><circle cx="991" cy="1034" r="3.2" fill="#6a5444" stroke="#3a2a20" stroke-width="1"/><circle cx="980" cy="869" r="3.2" fill="#6a5444" stroke="#3a2a20" stroke-width="1"/><circle cx="734" cy="683" r="3.2" fill="#6a5444" stroke="#3a2a20" stroke-width="1"/><circle cx="565" cy="975" r="3.2" fill="#6a5444" stroke="#3a2a20" stroke-width="1"/><polygon points="493.2,1123.3 513.0,1116.6 549.7,1115.0 574.7,1120.0 596.3,1130.0 594.6,1138.0 591.3,1146.5 608.0,1174.8 633.0,1191.4 666.0,1203.0 700.0,1214.0 724.0,1234.0 751.0,1256.0 785.0,1262.0 800.0,1252.0 800.0,1205.0 840.0,1212.0 880.0,1203.0 922.0,1203.0 945.0,1197.0 956.0,1215.0 960.0,1260.0 951.5,1292.0 946.0,1300.4 931.4,1318.7 904.0,1340.5 849.4,1364.0 794.7,1382.5 740.0,1402.5 730.0,1405.0 603.0,1405.0 599.6,1372.6 566.4,1359.3 536.4,1354.3 500.0,1341.0 465.0,1324.4 465.0,1301.0 471.6,1276.0 488.2,1276.0 493.2,1241.0 500.0,1208.0 506.5,1183.0 504.9,1138.0" fill="#241a16" /><polygon points="951.5,1200.0 1000.0,1196.0 1050.0,1190.0 1064.0,1160.0 1066.0,1200.0 1062.0,1232.0 1040.0,1262.0 999.0,1272.0 960.0,1288.0 951.5,1267.0" fill="#2b2928" /><polygon points="1040.0,1168.0 1066.0,1160.0 1066.0,1232.0 1052.0,1236.0" fill="#221c19" /><polygon points="504.9,1138.0 594.6,1138.0 589.6,1183.0 616.0,1307.8 560.0,1310.0 493.2,1300.0 488.2,1276.0 493.2,1241.0 500.0,1208.0 506.5,1183.0" fill="#2c1c18" /><polygon points="520.0,1140.0 580.0,1140.0 575.0,1190.0 550.0,1250.0 520.0,1200.0" fill="#321f1b" /><polygon points="488.0,1126.0 513.0,1114.0 549.7,1112.0 576.0,1117.0 598.0,1128.0 596.0,1138.0 560.0,1132.0 510.0,1134.0" fill="#2e1d19" /><polygon points="588.0,1189.8 616.0,1206.4 649.5,1216.4 699.3,1223.0 724.3,1236.3 720.0,1242.0 610.0,1240.0 595.0,1225.0" fill="#3a2622" /><polygon points="740.0,1258.0 785.6,1264.0 800.0,1285.0 830.0,1270.0 849.0,1267.0 895.0,1258.0 922.0,1250.0 946.0,1230.0 960.0,1250.0 946.0,1300.0 931.0,1318.0 880.0,1330.0 800.0,1345.0 740.0,1340.0" fill="#4a3f39" /><path d="M745 1275 Q840 1290 945 1260 M745 1290 Q840 1305 940 1280 M745 1305 Q840 1318 935 1295 M745 1320 Q840 1330 925 1310" fill="none" stroke="#3a302b" stroke-width="1.2" /><polygon points="780.0,1342.0 793.0,1338.0 797.0,1345.0 784.0,1350.0" fill="#5f5853" /><polygon points="797.5,1336.8 810.5,1332.8 814.5,1339.8 801.5,1344.8" fill="#5f5853" /><polygon points="815.0,1331.6 828.0,1327.6 832.0,1334.6 819.0,1339.6" fill="#5f5853" /><polygon points="832.5,1326.4 845.5,1322.4 849.5,1329.4 836.5,1334.4" fill="#5f5853" /><polygon points="850.0,1321.2 863.0,1317.2 867.0,1324.2 854.0,1329.2" fill="#5f5853" /><polygon points="867.5,1316.0 880.5,1312.0 884.5,1319.0 871.5,1324.0" fill="#5f5853" /><polygon points="885.0,1310.8 898.0,1306.8 902.0,1313.8 889.0,1318.8" fill="#5f5853" /><polygon points="902.5,1305.6 915.5,1301.6 919.5,1308.6 906.5,1313.6" fill="#5f5853" /><polygon points="920.0,1300.4 933.0,1296.4 937.0,1303.4 924.0,1308.4" fill="#5f5853" /><polygon points="937.5,1295.2 950.5,1291.2 954.5,1298.2 941.5,1303.2" fill="#5f5853" /><polygon points="740.0,1350.0 800.0,1347.0 880.0,1336.0 940.0,1310.0 946.0,1300.4 931.4,1318.7 904.0,1340.5 849.4,1364.0 794.7,1382.5 740.0,1402.5" fill="#221a16" /><polygon points="895.0,1209.0 945.0,1197.0 960.0,1215.0 955.0,1260.0 922.0,1258.0 895.0,1240.0" fill="#3a2e28" /><polygon points="845.7,1231.0 893.0,1231.0 893.0,1282.0 845.7,1282.0" fill="#1e1614" /><line x1="1010" y1="1195" x2="1062" y2="1160" stroke="#5a4838" stroke-width="4" /><polygon points="608.0,1253.0 724.0,1253.0 724.0,1266.0 608.0,1266.0" fill="#2a201c" /><polygon points="608.0,1274.5 716.0,1274.5 716.0,1286.0 608.0,1286.0" fill="#4c423c" /><polygon points="641.0,1346.0 732.6,1346.0 732.6,1359.0 641.0,1359.0" fill="#4a403a" /><polygon points="465.0,1301.0 616.0,1307.8 616.0,1330.0 465.0,1324.4" fill="#2e221e" /><path d="M470 1312 H612" fill="none" stroke="#3e302a" stroke-width="2" /><polygon points="630.0,1378.0 740.0,1368.0 745.0,1395.0 650.0,1403.0" fill="#3a2e26" /><clipPath id="tallw"><polygon points="539.8,1188 561.4,1213 559.7,1266 566.4,1264.6 569.7,1304.5 548,1301"/></clipPath><polygon points="539.8,1188.0 561.4,1213.0 559.7,1266.0 566.4,1264.6 569.7,1304.5 548.0,1301.0" fill="url(#win)" /><g clip-path="url(#tallw)"><line x1="536" y1="1192" x2="572" y2="1192" stroke="#9a4a18" stroke-width="0.9" /><line x1="536" y1="1198" x2="572" y2="1198" stroke="#9a4a18" stroke-width="0.9" /><line x1="536" y1="1204" x2="572" y2="1204" stroke="#9a4a18" stroke-width="0.9" /><line x1="536" y1="1210" x2="572" y2="1210" stroke="#9a4a18" stroke-width="0.9" /><line x1="536" y1="1216" x2="572" y2="1216" stroke="#9a4a18" stroke-width="0.9" /><line x1="536" y1="1222" x2="572" y2="1222" stroke="#9a4a18" stroke-width="0.9" /><line x1="536" y1="1228" x2="572" y2="1228" stroke="#9a4a18" stroke-width="0.9" /><line x1="536" y1="1234" x2="572" y2="1234" stroke="#9a4a18" stroke-width="0.9" /><line x1="536" y1="1240" x2="572" y2="1240" stroke="#9a4a18" stroke-width="0.9" /><line x1="536" y1="1246" x2="572" y2="1246" stroke="#9a4a18" stroke-width="0.9" /><line x1="536" y1="1252" x2="572" y2="1252" stroke="#9a4a18" stroke-width="0.9" /><line x1="536" y1="1258" x2="572" y2="1258" stroke="#9a4a18" stroke-width="0.9" /><line x1="536" y1="1264" x2="572" y2="1264" stroke="#9a4a18" stroke-width="0.9" /><line x1="536" y1="1270" x2="572" y2="1270" stroke="#9a4a18" stroke-width="0.9" /><line x1="536" y1="1276" x2="572" y2="1276" stroke="#9a4a18" stroke-width="0.9" /><line x1="536" y1="1282" x2="572" y2="1282" stroke="#9a4a18" stroke-width="0.9" /><line x1="536" y1="1288" x2="572" y2="1288" stroke="#9a4a18" stroke-width="0.9" /><line x1="536" y1="1294" x2="572" y2="1294" stroke="#9a4a18" stroke-width="0.9" /><line x1="536" y1="1300" x2="572" y2="1300" stroke="#9a4a18" stroke-width="0.9" /><line x1="543" y1="1186" x2="543" y2="1306" stroke="#9a4a18" stroke-width="0.9" /><line x1="549" y1="1186" x2="549" y2="1306" stroke="#9a4a18" stroke-width="0.9" /><line x1="555" y1="1186" x2="555" y2="1306" stroke="#9a4a18" stroke-width="0.9" /><line x1="561" y1="1186" x2="561" y2="1306" stroke="#9a4a18" stroke-width="0.9" /><line x1="567" y1="1186" x2="567" y2="1306" stroke="#9a4a18" stroke-width="0.9" /></g><path d="M610.4 1269.5 V1247.55 A6.25 6.25 0 0 1 622.9 1247.55 V1269.5Z" fill="url(#win)" stroke="none" stroke-width="1" /><path d="M616.65 1241.3 V1269.5 M610.4 1256.81 H622.9" fill="none" stroke="#7a3a10" stroke-width="0.8" /><path d="M634.5 1269.5 V1247.9499999999998 A6.649999999999977 6.649999999999977 0 0 1 647.8 1247.9499999999998 V1269.5Z" fill="url(#win)" stroke="none" stroke-width="1" /><path d="M641.15 1241.3 V1269.5 M634.5 1256.81 H647.8" fill="none" stroke="#7a3a10" stroke-width="0.8" /><path d="M657 1269.5 V1247.8 A6.5 6.5 0 0 1 670 1247.8 V1269.5Z" fill="url(#win)" stroke="none" stroke-width="1" /><path d="M663.5 1241.3 V1269.5 M657 1256.81 H670" fill="none" stroke="#7a3a10" stroke-width="0.8" /><path d="M680.2 1269.5 V1247.1499999999999 A5.849999999999966 5.849999999999966 0 0 1 691.9 1247.1499999999999 V1269.5Z" fill="url(#win)" stroke="none" stroke-width="1" /><path d="M686.05 1241.3 V1269.5 M680.2 1256.81 H691.9" fill="none" stroke="#7a3a10" stroke-width="0.8" /><path d="M632.8 1342.7 V1316.9 A4.100000000000023 4.100000000000023 0 0 1 641 1316.9 V1342.7Z" fill="url(#win)" stroke="none" stroke-width="1" /><path d="M636.9 1312.8 V1342.7 M632.8 1329.245 H641" fill="none" stroke="#7a3a10" stroke-width="0.8" /><path d="M651 1342.7 V1319.5 A6.699999999999989 6.699999999999989 0 0 1 664.4 1319.5 V1342.7Z" fill="url(#win)" stroke="none" stroke-width="1" /><path d="M657.7 1312.8 V1342.7 M651 1329.245 H664.4" fill="none" stroke="#7a3a10" stroke-width="0.8" /><path d="M672.7 1342.7 V1319.4499999999998 A6.649999999999977 6.649999999999977 0 0 1 686 1319.4499999999998 V1342.7Z" fill="url(#win)" stroke="none" stroke-width="1" /><path d="M679.35 1312.8 V1342.7 M672.7 1329.245 H686" fill="none" stroke="#7a3a10" stroke-width="0.8" /><path d="M695 1342.7 V1319.1 A6.300000000000011 6.300000000000011 0 0 1 707.6 1319.1 V1342.7Z" fill="url(#win)" stroke="none" stroke-width="1" /><path d="M701.3 1312.8 V1342.7 M695 1329.245 H707.6" fill="none" stroke="#7a3a10" stroke-width="0.8" /><path d="M840.3 1265.8 V1253.05 A5.4500000000000455 5.4500000000000455 0 0 1 851.2 1253.05 V1265.8Z" fill="url(#win)" stroke="none" stroke-width="1" /><path d="M845.75 1247.6 V1265.8 M840.3 1257.61 H851.2" fill="none" stroke="#7a3a10" stroke-width="0.8" /><path d="M858.5 1265.8 V1254.8500000000001 A5.449999999999989 5.449999999999989 0 0 1 869.4 1254.8500000000001 V1265.8Z" fill="url(#win)" stroke="none" stroke-width="1" /><path d="M863.95 1249.4 V1265.8 M858.5 1258.42 H869.4" fill="none" stroke="#7a3a10" stroke-width="0.8" /><line x1="610" y1="1259" x2="610" y2="1274" stroke="#3e3430" stroke-width="1.6" /><line x1="616" y1="1259" x2="616" y2="1274" stroke="#3e3430" stroke-width="1.6" /><line x1="622" y1="1259" x2="622" y2="1274" stroke="#3e3430" stroke-width="1.6" /><line x1="628" y1="1259" x2="628" y2="1274" stroke="#3e3430" stroke-width="1.6" /><line x1="634" y1="1259" x2="634" y2="1274" stroke="#3e3430" stroke-width="1.6" /><line x1="640" y1="1259" x2="640" y2="1274" stroke="#3e3430" stroke-width="1.6" /><line x1="646" y1="1259" x2="646" y2="1274" stroke="#3e3430" stroke-width="1.6" /><line x1="652" y1="1259" x2="652" y2="1274" stroke="#3e3430" stroke-width="1.6" /><line x1="658" y1="1259" x2="658" y2="1274" stroke="#3e3430" stroke-width="1.6" /><line x1="664" y1="1259" x2="664" y2="1274" stroke="#3e3430" stroke-width="1.6" /><line x1="670" y1="1259" x2="670" y2="1274" stroke="#3e3430" stroke-width="1.6" /><line x1="676" y1="1259" x2="676" y2="1274" stroke="#3e3430" stroke-width="1.6" /><line x1="682" y1="1259" x2="682" y2="1274" stroke="#3e3430" stroke-width="1.6" /><line x1="688" y1="1259" x2="688" y2="1274" stroke="#3e3430" stroke-width="1.6" /><line x1="694" y1="1259" x2="694" y2="1274" stroke="#3e3430" stroke-width="1.6" /><line x1="700" y1="1259" x2="700" y2="1274" stroke="#3e3430" stroke-width="1.6" /><line x1="706" y1="1259" x2="706" y2="1274" stroke="#3e3430" stroke-width="1.6" /><line x1="712" y1="1259" x2="712" y2="1274" stroke="#3e3430" stroke-width="1.6" /><line x1="718" y1="1259" x2="718" y2="1274" stroke="#3e3430" stroke-width="1.6" /><line x1="643" y1="1327" x2="643" y2="1346" stroke="#3e3430" stroke-width="1.6" /><line x1="649" y1="1327" x2="649" y2="1346" stroke="#3e3430" stroke-width="1.6" /><line x1="655" y1="1327" x2="655" y2="1346" stroke="#3e3430" stroke-width="1.6" /><line x1="661" y1="1327" x2="661" y2="1346" stroke="#3e3430" stroke-width="1.6" /><line x1="667" y1="1327" x2="667" y2="1346" stroke="#3e3430" stroke-width="1.6" /><line x1="673" y1="1327" x2="673" y2="1346" stroke="#3e3430" stroke-width="1.6" /><line x1="679" y1="1327" x2="679" y2="1346" stroke="#3e3430" stroke-width="1.6" /><line x1="685" y1="1327" x2="685" y2="1346" stroke="#3e3430" stroke-width="1.6" /><line x1="691" y1="1327" x2="691" y2="1346" stroke="#3e3430" stroke-width="1.6" /><line x1="697" y1="1327" x2="697" y2="1346" stroke="#3e3430" stroke-width="1.6" /><line x1="703" y1="1327" x2="703" y2="1346" stroke="#3e3430" stroke-width="1.6" /><line x1="709" y1="1327" x2="709" y2="1346" stroke="#3e3430" stroke-width="1.6" /><line x1="715" y1="1327" x2="715" y2="1346" stroke="#3e3430" stroke-width="1.6" /><line x1="721" y1="1327" x2="721" y2="1346" stroke="#3e3430" stroke-width="1.6" /><line x1="727" y1="1327" x2="727" y2="1346" stroke="#3e3430" stroke-width="1.6" /><line x1="470" y1="1312" x2="471" y2="1330" stroke="#3a2d28" stroke-width="1.8" /><line x1="476" y1="1312" x2="477" y2="1330" stroke="#3a2d28" stroke-width="1.8" /><line x1="482" y1="1312" x2="483" y2="1330" stroke="#3a2d28" stroke-width="1.8" /><line x1="488" y1="1312" x2="489" y2="1330" stroke="#3a2d28" stroke-width="1.8" /><line x1="494" y1="1312" x2="495" y2="1330" stroke="#3a2d28" stroke-width="1.8" /><line x1="500" y1="1312" x2="501" y2="1330" stroke="#3a2d28" stroke-width="1.8" /><line x1="506" y1="1312" x2="507" y2="1330" stroke="#3a2d28" stroke-width="1.8" /><line x1="512" y1="1312" x2="513" y2="1330" stroke="#3a2d28" stroke-width="1.8" /><line x1="518" y1="1312" x2="519" y2="1330" stroke="#3a2d28" stroke-width="1.8" /><line x1="524" y1="1312" x2="525" y2="1330" stroke="#3a2d28" stroke-width="1.8" /><line x1="530" y1="1312" x2="531" y2="1330" stroke="#3a2d28" stroke-width="1.8" /><line x1="536" y1="1312" x2="537" y2="1330" stroke="#3a2d28" stroke-width="1.8" /><line x1="542" y1="1312" x2="543" y2="1330" stroke="#3a2d28" stroke-width="1.8" /><line x1="548" y1="1312" x2="549" y2="1330" stroke="#3a2d28" stroke-width="1.8" /><line x1="554" y1="1312" x2="555" y2="1330" stroke="#3a2d28" stroke-width="1.8" /><line x1="560" y1="1312" x2="561" y2="1330" stroke="#3a2d28" stroke-width="1.8" /><line x1="566" y1="1312" x2="567" y2="1330" stroke="#3a2d28" stroke-width="1.8" /><line x1="572" y1="1312" x2="573" y2="1330" stroke="#3a2d28" stroke-width="1.8" /><line x1="578" y1="1312" x2="579" y2="1330" stroke="#3a2d28" stroke-width="1.8" /><line x1="584" y1="1312" x2="585" y2="1330" stroke="#3a2d28" stroke-width="1.8" /><line x1="590" y1="1312" x2="591" y2="1330" stroke="#3a2d28" stroke-width="1.8" /><line x1="596" y1="1312" x2="597" y2="1330" stroke="#3a2d28" stroke-width="1.8" /><line x1="602" y1="1312" x2="603" y2="1330" stroke="#3a2d28" stroke-width="1.8" /><line x1="608" y1="1312" x2="609" y2="1330" stroke="#3a2d28" stroke-width="1.8" /><path d="M466 1298 L520 1300 Q560 1302 600 1312" fill="none" stroke="#3e302a" stroke-width="2.5" /><path d="M590 1145 Q600 1220 616 1305" fill="none" stroke="#3a2622" stroke-width="4" /><path d="M506 1140 Q500 1220 492 1290" fill="none" stroke="#34221e" stroke-width="3" /><line x1="608" y1="1259" x2="724" y2="1259" stroke="#4a403a" stroke-width="2.5" /><line x1="641" y1="1327" x2="732" y2="1327" stroke="#4a403a" stroke-width="2.5" /><rect x="605.5" y="822" width="7" height="7" fill="#d8b050" stroke="#2a2018" stroke-width="1.2"/><rect x="483.5" y="953" width="7" height="7" fill="#d8b050" stroke="#2a2018" stroke-width="1.2"/><rect x="495.5" y="1156" width="7" height="7" fill="#d8b050" stroke="#2a2018" stroke-width="1.2"/><rect x="588.5" y="1162" width="7" height="7" fill="#d8b050" stroke="#2a2018" stroke-width="1.2"/><rect x="766.5" y="1024" width="7" height="7" fill="#d8b050" stroke="#2a2018" stroke-width="1.2"/><rect x="1058.5" y="1164" width="7" height="7" fill="#d8b050" stroke="#2a2018" stroke-width="1.2"/><circle cx="794.7" cy="1388" r="9.5" fill="none" stroke="#e8e8e8" stroke-width="1.6" stroke-dasharray="4 3"/><circle cx="794.7" cy="1388" r="9.5" fill="none" stroke="#d83a3a" stroke-width="1.6" stroke-dasharray="4 3" stroke-dashoffset="3.5"/><path d="M758 1243 L766 1230 L775 1238 L777 1249 Z" fill="none" stroke="#111" stroke-width="1.4" /></g></svg>
<div class="b" style="left:10px;top:532px;width:1554px;height:27px;background:linear-gradient(rgba(40,40,40,0.55),rgba(44,44,44,0.52))"></div>
<div class="b" style="left:24px;top:538px;width:18px;height:18px;background:#3a3a3a;border-radius:3px;"></div>
<svg style="left:24px;top:538px;" width="18" height="18" viewBox="0 0 18 18"><rect x="1.5" y="1.5" width="15" height="15" fill="none" stroke="#b08050" stroke-width="1.3" stroke-dasharray="2 1.5"/><path d="M7 5 L13 9 L9.5 10 L8 13Z" fill="#e0e0e0"/></svg>
<div class="b" style="left:54px;top:538px;width:94px;height:18px;background:#3d3d3d;border-radius:3px;"></div>
<div class="b" style="left:54px;top:538px;width:18px;height:18px;background:#4772b3;border-radius:3px 0 0 3px"></div>
<svg style="left:54px;top:538px;" width="18" height="18" viewBox="0 0 18 18"><rect x="3" y="3" width="12" height="12" fill="none" stroke="#fff" stroke-width="1.3" stroke-dasharray="2 1.6"/></svg>
<svg style="left:72px;top:538px;" width="19" height="18" viewBox="0 0 19 18"><path d="M3 8 H8 V3 H16 V11 H11 V16 H3Z" fill="#cfcfcf"/></svg>
<svg style="left:91px;top:538px;" width="19" height="18" viewBox="0 0 19 18"><rect x="3" y="7" width="9" height="9" fill="none" stroke="#cfcfcf" stroke-dasharray="2 1.5"/><path d="M7 3 H16 V12 H11 V7 H7Z" fill="#cfcfcf"/></svg>
<svg style="left:110px;top:538px;" width="19" height="18" viewBox="0 0 19 18"><path d="M3 7 H7 V3 H16 V12 H12 V16 H3Z M7 7 V12 H12 V7Z" fill="#cfcfcf" fill-rule="evenodd"/></svg>
<svg style="left:129px;top:538px;" width="19" height="18" viewBox="0 0 19 18"><rect x="3" y="3" width="13" height="13" fill="none" stroke="#cfcfcf" stroke-dasharray="2 1.5"/><rect x="6.5" y="6.5" width="6" height="6" fill="#cfcfcf"/></svg>
<div class="b" style="left:1496px;top:538px;width:61px;height:18px;background:#282828;border-radius:3px;"></div>
<div class="t" style="left:1503px;top:541.69px;font-size:11px;color:#dedede;">Options</div>
<svg style="left:1545.5px;top:544.5px" width="9" height="7" viewBox="0 0 9 7"><path d="M1 1.75 L4.5 4.8999999999999995 L8 1.75" fill="none" stroke="#bdbdbd" stroke-width="1.3"/></svg>
<svg style="left:10px;top:576px;" width="6" height="9" viewBox="0 0 6 9"><path d="M1 1 L4.5 4.5 L1 8" fill="none" stroke="#777" stroke-width="1.1"/></svg>
<div class="t" style="left:19px;top:570.39px;font-size:11px;color:#e6e6e6;">User Perspective</div>
<div class="t" style="left:19px;top:587.99px;font-size:11px;color:#e6e6e6;">(42) Collection | Candile16</div>
<div class="b" style="left:1502px;top:484px;width:192px;height:19px;background:#1d1d1d;border-radius:3px;"></div>
<div class="b" style="left:1502px;top:484px;width:31px;height:19px;background:#282828;border-radius:3px 0 0 3px"></div>
<svg style="left:1504px;top:485px;" width="20" height="18" viewBox="0 0 20 18"><path d="M6 3 L10 11 A4 4 0 0 1 2 11Z" fill="#e0e0e0"/><circle cx="12" cy="4" r="2" fill="#e0e0e0"/><circle cx="11" cy="12" r="3.5" fill="#282828" stroke="#e0e0e0" stroke-width="1.2"/></svg>
<svg style="left:1523.5px;top:490.5px" width="9" height="7" viewBox="0 0 9 7"><path d="M1 1.75 L4.5 4.8999999999999995 L8 1.75" fill="none" stroke="#bdbdbd" stroke-width="1.3"/></svg>
<div class="t" style="left:1541px;top:488.69px;font-size:11px;color:#e6e6e6;">Scene</div>
<svg style="left:1634px;top:485px;" width="16" height="17" viewBox="0 0 16 17"><path d="M3 15 L7 10 M5 8 L10 3 L14 7 L9 12Z" fill="none" stroke="#888" stroke-width="1.2"/></svg>
<div class="b" style="left:1653px;top:484px;width:20px;height:19px;background:#3b3b3b;"></div>
<svg style="left:1655px;top:486px;" width="16" height="16" viewBox="0 0 16 16"><path d="M4 4 H10 L13 7 V13 H4Z M2 2 H8" fill="none" stroke="#cfcfcf" stroke-width="1.2"/><path d="M2 2 V11" stroke="#cfcfcf" stroke-width="1.2"/></svg>
<div class="b" style="left:1673px;top:484px;width:21px;height:19px;background:#2a2a2a;border-radius:0 3px 3px 0"></div>
<svg style="left:1677px;top:487px;" width="14" height="14" viewBox="0 0 14 14"><path d="M3 3 L11 11 M11 3 L3 11" stroke="#666" stroke-width="1.2"/></svg>
<div class="b" style="left:1700px;top:484px;width:165px;height:19px;background:#1d1d1d;border-radius:3px;"></div>
<div class="b" style="left:1700px;top:484px;width:31px;height:19px;background:#282828;border-radius:3px 0 0 3px"></div>
<svg style="left:1703px;top:485px;" width="18" height="18" viewBox="0 0 18 18"><rect x="6" y="2" width="10" height="10" fill="none" stroke="#d8d8d8" stroke-width="1.2"/><path d="M4 4 V14 H14 M2 6 V16 H12" fill="none" stroke="#d8d8d8" stroke-width="1"/><path d="M7 11 L10 6 L12 9 L14 7 L15 11Z" fill="#d8d8d8"/></svg>
<svg style="left:1720.5px;top:490.5px" width="9" height="7" viewBox="0 0 9 7"><path d="M1 1.75 L4.5 4.8999999999999995 L8 1.75" fill="none" stroke="#bdbdbd" stroke-width="1.3"/></svg>
<div class="t" style="left:1738px;top:488.69px;font-size:11px;color:#e6e6e6;">ViewLayer</div>
<div class="b" style="left:1850px;top:484px;width:15px;height:19px;background:#3b3b3b;"></div>
<svg style="left:1853px;top:486px;" width="12" height="16" viewBox="0 0 12 16"><path d="M3 3 H10 M3 3 V13 H10" fill="none" stroke="#cfcfcf" stroke-width="1.2"/></svg>
<div class="b" style="left:1567px;top:508px;width:298px;height:169px;background:#282828;border-radius:5px 0 0 5px"></div>
<div class="b" style="left:1576px;top:511px;width:31px;height:19px;background:#282828;border-radius:3px;box-shadow:0 0 0 1px #222"></div>
<svg style="left:1578px;top:512px;" width="20" height="17" viewBox="0 0 20 17"><rect x="3" y="2" width="5" height="3" fill="#ddd"/><path d="M4 5 V13 H8 M4 9 H8" stroke="#ddd" fill="none"/><rect x="8" y="7" width="9" height="3.5" fill="#ddd"/><rect x="8" y="11.5" width="9" height="3.5" fill="#ddd"/></svg>
<svg style="left:1595.5px;top:516.5px" width="9" height="7" viewBox="0 0 9 7"><path d="M1 1.75 L4.5 4.8999999999999995 L8 1.75" fill="none" stroke="#bdbdbd" stroke-width="1.3"/></svg>
<div class="b" style="left:1613px;top:511px;width:31px;height:19px;background:#282828;border-radius:3px;box-shadow:0 0 0 1px #222"></div>
<svg style="left:1616px;top:512px;" width="18" height="18" viewBox="0 0 18 18"><rect x="6" y="2" width="10" height="10" fill="none" stroke="#d8d8d8" stroke-width="1.2"/><path d="M4 4 V14 H14 M2 6 V16 H12" fill="none" stroke="#d8d8d8" stroke-width="1"/><path d="M7 11 L10 6 L12 9 L14 7 L15 11Z" fill="#d8d8d8"/></svg>
<svg style="left:1632.5px;top:516.5px" width="9" height="7" viewBox="0 0 9 7"><path d="M1 1.75 L4.5 4.8999999999999995 L8 1.75" fill="none" stroke="#bdbdbd" stroke-width="1.3"/></svg>
<div class="b" style="left:1666px;top:511px;width:111px;height:19px;background:#1d1d1d;border-radius:4px;"></div>
<svg style="left:1670px;top:512px;" width="16" height="16" viewBox="0 0 16 16"><circle cx="9.5" cy="6.5" r="4.3" fill="none" stroke="#d8d8d8" stroke-width="1.3"/><path d="M6.5 9.5 L2 14" stroke="#d8d8d8" stroke-width="1.4"/></svg>
<div class="b" style="left:1834px;top:511px;width:31px;height:19px;background:#282828;border-radius:3px;box-shadow:0 0 0 1px #222"></div>
<svg style="left:1836px;top:512px;" width="16" height="17" viewBox="0 0 16 17"><path d="M2 2 H14 L9 8 V15 L7 13 V8Z" fill="none" stroke="#d8d8d8" stroke-width="1.2"/></svg>
<svg style="left:1854.5px;top:516.5px" width="9" height="7" viewBox="0 0 9 7"><path d="M1 1.75 L4.5 4.8999999999999995 L8 1.75" fill="none" stroke="#bdbdbd" stroke-width="1.3"/></svg>
<div class="b" style="left:1567px;top:554px;width:298px;height:20px;background:#2b2b2b;"></div>
<div class="b" style="left:1567px;top:594px;width:298px;height:20px;background:#2b2b2b;"></div>
<div class="b" style="left:1567px;top:634px;width:298px;height:20px;background:#2b2b2b;"></div>
<svg style="left:1590px;top:538px;" width="16" height="15" viewBox="0 0 16 15"><rect x="1" y="1" width="13" height="3" fill="#d8d8d8"/><path d="M2 5 H13 V13 H2Z" fill="#d8d8d8"/><rect x="5.5" y="7" width="4" height="1.5" fill="#282828"/></svg>
<div class="t" style="left:1611px;top:540.09px;font-size:11px;color:#d8d8d8;">Scene Collection</div>
<svg style="left:1592px;top:559px;" width="10" height="10" viewBox="0 0 10 10"><path d="M1 2 H9 L5 8Z" fill="#c8c8c8"/></svg>
<div class="b" style="left:1607px;top:555px;width:20px;height:18px;background:#3a3a3a;border-radius:3px;box-shadow:inset 0 0 0 1px #555"></div>
<svg style="left:1609px;top:557px;" width="16" height="15" viewBox="0 0 16 15"><rect x="1" y="1" width="13" height="3" fill="#d8d8d8"/><path d="M2 5 H13 V13 H2Z" fill="#d8d8d8"/><rect x="5.5" y="7" width="4" height="1.5" fill="#3a3a3a"/></svg>
<div class="t" style="left:1631px;top:560.09px;font-size:11px;color:#dedede;">Collection</div>
<div class="b" style="left:1833px;top:557px;width:12px;height:13px;background:#dcdcdc;border-radius:2px;"></div>
<svg style="left:1834px;top:558px;" width="10" height="11" viewBox="0 0 10 11"><path d="M2 5.5 L4.3 8 L8.5 2.5" fill="none" stroke="#222" stroke-width="1.8"/></svg>
<svg style="left:1851px;top:558px;" width="16" height="12" viewBox="0 0 16 12"><path d="M1 6 Q8 -2 15 6 Q8 14 1 6Z" fill="none" stroke="#e0e0e0" stroke-width="1.6"/><circle cx="8" cy="6" r="2.3" fill="#e0e0e0"/></svg>
<div class="b" style="left:1596px;top:579px;width:1px;height:89px;background:#555;"></div>
<svg style="left:1613px;top:580.3px;" width="9" height="10" viewBox="0 0 9 10"><path d="M1 1 L8 5 L1 9Z" fill="#c8c8c8"/></svg>
<svg style="left:1628px;top:577.3px;" width="17" height="16" viewBox="0 0 17 16"><circle cx="5" cy="5" r="3.5" fill="#e8954f"/><circle cx="11" cy="5" r="3.5" fill="#e8954f"/><rect x="3" y="8" width="9" height="6" fill="#e8954f"/><path d="M12 11 L16 8 V15Z" fill="#e8954f"/><circle cx="5" cy="5" r="1" fill="#282828"/><circle cx="11" cy="5" r="1" fill="#282828"/></svg>
<div class="t" style="left:1651px;top:579.99px;font-size:11px;color:#dedede;">Camera</div>
<svg style="left:1851px;top:579.3px;" width="16" height="12" viewBox="0 0 16 12"><path d="M1 6 Q8 -2 15 6 Q8 14 1 6Z" fill="none" stroke="#e0e0e0" stroke-width="1.6"/><circle cx="8" cy="6" r="2.3" fill="#e0e0e0"/></svg>
<svg style="left:1613px;top:600.3px;" width="9" height="10" viewBox="0 0 9 10"><path d="M1 1 L8 5 L1 9Z" fill="#c8c8c8"/></svg>
<svg style="left:1628px;top:597.3px;" width="17" height="17" viewBox="0 0 17 17"><circle cx="8.5" cy="6.5" r="5.5" fill="#e8954f"/><rect x="6" y="11" width="5" height="4" fill="#e8954f"/><path d="M6 5 L7 8 H10 L11 5" stroke="#5a3a20" fill="none" stroke-width="1"/></svg>
<div class="t" style="left:1651px;top:599.99px;font-size:11px;color:#dedede;">Light</div>
<svg style="left:1851px;top:599.3px;" width="16" height="12" viewBox="0 0 16 12"><path d="M1 6 Q8 -2 15 6 Q8 14 1 6Z" fill="none" stroke="#e0e0e0" stroke-width="1.6"/><circle cx="8" cy="6" r="2.3" fill="#e0e0e0"/></svg>
<svg style="left:1613px;top:620.3px;" width="9" height="10" viewBox="0 0 9 10"><path d="M1 1 L8 5 L1 9Z" fill="#c8c8c8"/></svg>
<svg style="left:1628px;top:617.3px;" width="17" height="17" viewBox="0 0 17 17"><circle cx="8.5" cy="6.5" r="5.5" fill="#e8954f"/><rect x="6" y="11" width="5" height="4" fill="#e8954f"/><path d="M6 5 L7 8 H10 L11 5" stroke="#5a3a20" fill="none" stroke-width="1"/></svg>
<div class="t" style="left:1651px;top:619.99px;font-size:11px;color:#dedede;">Point</div>
<svg style="left:1851px;top:619.3px;" width="16" height="12" viewBox="0 0 16 12"><path d="M1 6 Q8 -2 15 6 Q8 14 1 6Z" fill="none" stroke="#e0e0e0" stroke-width="1.6"/><circle cx="8" cy="6" r="2.3" fill="#e0e0e0"/></svg>
<svg style="left:1613px;top:640.3px;" width="9" height="10" viewBox="0 0 9 10"><path d="M1 1 L8 5 L1 9Z" fill="#c8c8c8"/></svg>
<svg style="left:1628px;top:637.3px;" width="17" height="16" viewBox="0 0 17 16"><path d="M8 2 V9 M8 9 H15 M8 9 L2 14" stroke="#e8954f" stroke-width="2.4" fill="none" stroke-linecap="round"/></svg>
<div class="t" style="left:1651px;top:639.99px;font-size:11px;color:#dedede;">Spartan</div>
<svg style="left:1851px;top:639.3px;" width="16" height="12" viewBox="0 0 16 12"><path d="M1 6 Q8 -2 15 6 Q8 14 1 6Z" fill="none" stroke="#e0e0e0" stroke-width="1.6"/><circle cx="8" cy="6" r="2.3" fill="#e0e0e0"/></svg>
<svg style="left:1613px;top:660.3px;" width="9" height="10" viewBox="0 0 9 10"><path d="M1 1 L8 5 L1 9Z" fill="#c8c8c8"/></svg>
<svg style="left:1628px;top:657.3px;" width="17" height="17" viewBox="0 0 17 17"><circle cx="8.5" cy="6.5" r="5.5" fill="#e8954f"/><rect x="6" y="11" width="5" height="4" fill="#e8954f"/><path d="M6 5 L7 8 H10 L11 5" stroke="#5a3a20" fill="none" stroke-width="1"/></svg>
<div class="t" style="left:1651px;top:659.99px;font-size:11px;color:#dedede;">Sun</div>
<svg style="left:1851px;top:659.3px;" width="16" height="12" viewBox="0 0 16 12"><path d="M1 6 Q8 -2 15 6 Q8 14 1 6Z" fill="none" stroke="#e0e0e0" stroke-width="1.6"/><circle cx="8" cy="6" r="2.3" fill="#e0e0e0"/></svg>
<div class="b" style="left:1710px;top:575px;width:20px;height:18px;background:#3c6f66;border-radius:3px;"></div>
<svg style="left:1712px;top:577px;" width="16" height="14" viewBox="0 0 16 14"><rect x="2" y="2" width="12" height="5" rx="2" fill="none" stroke="#3fb8a0" stroke-width="1.2"/><path d="M2 11 H14 M4 9 V13 M8 9 V13 M12 9 V13" stroke="#3fb8a0" stroke-width="1"/></svg>
<svg style="left:1698px;top:597.3px;" width="15" height="16" viewBox="0 0 15 16"><circle cx="7.5" cy="7" r="5.5" fill="none" stroke="#3fb8a0" stroke-width="1.2"/><circle cx="7.5" cy="7" r="1.2" fill="#3fb8a0"/><path d="M7.5 9 V15" stroke="#3fb8a0" stroke-width="1"/></svg>
<svg style="left:1698px;top:617.3px;" width="15" height="16" viewBox="0 0 15 16"><circle cx="7.5" cy="7" r="5.5" fill="none" stroke="#3fb8a0" stroke-width="1.2"/><circle cx="7.5" cy="7" r="1.2" fill="#3fb8a0"/><path d="M7.5 9 V15" stroke="#3fb8a0" stroke-width="1"/></svg>
<div class="b" style="left:1709px;top:636px;width:21px;height:17px;background:#5a4a3a;border-radius:3px;"></div>
<svg style="left:1710px;top:637px;" width="20" height="16" viewBox="0 0 20 16"><path d="M4 4 H15 L10 8Z" fill="#e8954f"/></svg>
<div class="t" style="left:1716px;top:644.88px;font-size:9px;color:#ddd;">123</div>
<svg style="left:1690px;top:657px;" width="17" height="17" viewBox="0 0 17 17"><circle cx="8.5" cy="8.5" r="3.5" fill="none" stroke="#3fb8a0" stroke-width="1.5"/><path d="M8.5 0.5 V3.5 M8.5 13.5 V16.5 M0.5 8.5 H3.5 M13.5 8.5 H16.5 M2.8 2.8 L5 5 M12 12 L14.2 14.2 M14.2 2.8 L12 5 M5 12 L2.8 14.2" stroke="#3fb8a0" stroke-width="1.5"/></svg>
<div class="b" style="left:1567px;top:680px;width:298px;height:725px;background:#303030;border-radius:5px 0 0 0"></div>
<div class="b" style="left:1567px;top:680px;width:298px;height:25px;background:#303030;border-radius:5px 0 0 0"></div>
<div class="b" style="left:1576px;top:683px;width:30px;height:18px;background:#282828;border-radius:3px;"></div>
<svg style="left:1578px;top:684px;" width="18" height="16" viewBox="0 0 18 16"><rect x="1.5" y="1.5" width="12" height="5.5" rx="2.75" fill="#ddd"/><rect x="1.5" y="9" width="12" height="5.5" rx="2.75" fill="#ddd"/><circle cx="11" cy="4.25" r="2" fill="#282828"/><circle cx="4" cy="11.75" r="2" fill="#282828"/></svg>
<svg style="left:1595.5px;top:688.5px" width="9" height="7" viewBox="0 0 9 7"><path d="M1 1.75 L4.5 4.8999999999999995 L8 1.75" fill="none" stroke="#bdbdbd" stroke-width="1.3"/></svg>
<div class="b" style="left:1679px;top:683px;width:109px;height:18px;background:#1d1d1d;border-radius:4px;"></div>
<svg style="left:1683px;top:684px;" width="16" height="16" viewBox="0 0 16 16"><circle cx="9.5" cy="6.5" r="4.3" fill="none" stroke="#d8d8d8" stroke-width="1.3"/><path d="M6.5 9.5 L2 14" stroke="#d8d8d8" stroke-width="1.4"/></svg>
<div class="b" style="left:1567px;top:705px;width:28px;height:700px;background:#1d1d1d;"></div>
<div class="b" style="left:1570px;top:1075px;width:26px;height:25px;background:#303030;border-radius:4px 0 0 4px"></div>
<svg style="left:1605px;top:714px;" width="17" height="17" viewBox="0 0 17 17"><path d="M2 5 V2 H5 M12 2 H15 V5 M15 12 V15 H12 M5 15 H2 V12" stroke="#cfcfcf" stroke-width="1" fill="none"/><rect x="5" y="5" width="7" height="7" fill="#e6e6e6"/></svg>
<div class="t" style="left:1629px;top:717.49px;font-size:11px;color:#e0e0e0;">Candile16</div>
<svg style="left:1695px;top:716px;" width="9" height="13" viewBox="0 0 9 13"><path d="M2 2 L7 6.5 L2 11" fill="none" stroke="#bbb" stroke-width="1.2"/></svg>
<svg style="left:1711px;top:714px;" width="16" height="16" viewBox="0 0 16 16"><path d="M3 3 H13 L8 13Z" fill="none" stroke="#e0e0e0" stroke-width="1.3"/><rect x="1" y="1" width="4" height="4" fill="#303030" stroke="#e0e0e0" stroke-width="1.3"/><rect x="11" y="1" width="4" height="4" fill="#303030" stroke="#e0e0e0" stroke-width="1.3"/><rect x="6" y="11" width="4" height="4" fill="#303030" stroke="#e0e0e0" stroke-width="1.3"/></svg>
<div class="t" style="left:1735.5px;top:717.49px;font-size:11px;color:#e0e0e0;">Mesh.112</div>
<div class="b" style="left:1604px;top:750px;width:276px;height:18px;background:#1d1d1d;border-radius:3px;"></div>
<div class="b" style="left:1604px;top:750px;width:30px;height:18px;background:#282828;border-radius:3px 0 0 3px"></div>
<svg style="left:1607px;top:751px;" width="16" height="16" viewBox="0 0 16 16"><path d="M3 3 H13 L8 13Z" fill="none" stroke="#e0e0e0" stroke-width="1.3"/><rect x="1" y="1" width="4" height="4" fill="#303030" stroke="#e0e0e0" stroke-width="1.3"/><rect x="11" y="1" width="4" height="4" fill="#303030" stroke="#e0e0e0" stroke-width="1.3"/><rect x="6" y="11" width="4" height="4" fill="#303030" stroke="#e0e0e0" stroke-width="1.3"/></svg>
<svg style="left:1623.5px;top:755.5px" width="9" height="7" viewBox="0 0 9 7"><path d="M1 1.75 L4.5 4.8999999999999995 L8 1.75" fill="none" stroke="#bdbdbd" stroke-width="1.3"/></svg>
<div class="t" style="left:1642px;top:753.69px;font-size:11px;color:#e0e0e0;">Mesh.112</div>
<div class="b" style="left:1603px;top:780px;width:277px;height:119px;background:#383838;border-radius:4px 0 0 4px"></div>
<div class="b" style="left:1603px;top:780px;width:277px;height:25px;background:#3d3d3d;border-radius:4px 0 0 4px"></div>
<svg style="left:1611px;top:788px;" width="11" height="8" viewBox="0 0 11 8"><path d="M1 1.5 L5.5 6 L10 1.5" fill="none" stroke="#aaa" stroke-width="1.1"/></svg>
<div class="t" style="left:1625px;top:788.09px;font-size:11px;color:#e6e6e6;">Vertex Groups</div>
<div class="b" style="left:1603px;top:805px;width:277px;height:94px;background:#383838;"></div>
<div class="b" style="left:1612px;top:813px;width:242px;height:78px;background:#2b2b2b;border-radius:4px;"></div>
<svg style="left:1621px;top:876px;" width="8" height="9" viewBox="0 0 8 9"><path d="M1 1 L7 4.5 L1 8Z" fill="#cfcfcf"/></svg>
<svg style="left:1737px;top:879px;" width="12" height="6" viewBox="0 0 12 6"><g fill="#cfcfcf"><rect x="0" y="0" width="1" height="1"/><rect x="3" y="0" width="1" height="1"/><rect x="6" y="0" width="1" height="1"/><rect x="9" y="0" width="1" height="1"/><rect x="0" y="3" width="1" height="1"/><rect x="3" y="3" width="1" height="1"/><rect x="6" y="3" width="1" height="1"/><rect x="9" y="3" width="1" height="1"/></g></svg>
<div class="b" style="left:1860px;top:810px;width:5px;height:90px;background:#3a3a3a;"></div>
<div class="b" style="left:1603px;top:902px;width:277px;height:145px;background:#383838;border-radius:4px 0 0 4px"></div>
<div class="b" style="left:1603px;top:902px;width:277px;height:25px;background:#3d3d3d;border-radius:4px 0 0 4px"></div>
<svg style="left:1611px;top:910px;" width="11" height="8" viewBox="0 0 11 8"><path d="M1 1.5 L5.5 6 L10 1.5" fill="none" stroke="#aaa" stroke-width="1.1"/></svg>
<div class="t" style="left:1625px;top:910.09px;font-size:11px;color:#e6e6e6;">Shape Keys</div>
<div class="b" style="left:1603px;top:927px;width:277px;height:120px;background:#383838;"></div>
<div class="b" style="left:1612px;top:936px;width:242px;height:77px;background:#2b2b2b;border-radius:4px;"></div>
<svg style="left:1621px;top:998px;" width="8" height="9" viewBox="0 0 8 9"><path d="M1 1 L7 4.5 L1 8Z" fill="#cfcfcf"/></svg>
<svg style="left:1737px;top:1001px;" width="12" height="6" viewBox="0 0 12 6"><g fill="#cfcfcf"><rect x="0" y="0" width="1" height="1"/><rect x="3" y="0" width="1" height="1"/><rect x="6" y="0" width="1" height="1"/><rect x="9" y="0" width="1" height="1"/><rect x="0" y="3" width="1" height="1"/><rect x="3" y="3" width="1" height="1"/><rect x="6" y="3" width="1" height="1"/><rect x="9" y="3" width="1" height="1"/></g></svg>
<div class="b" style="left:1612px;top:1024px;width:12px;height:12px;background:#545454;border-radius:2px;"></div>
<div class="t" style="left:1628px;top:1025.09px;font-size:11px;color:#e0e0e0;">Add Rest Position</div>
<div class="b" style="left:1603px;top:1050px;width:277px;height:25px;background:#3d3d3d;border-radius:4px 0 0 4px"></div>
<svg style="left:1613px;top:1057px;" width="8" height="11" viewBox="0 0 8 11"><path d="M1.5 1 L6 5.5 L1.5 10" fill="none" stroke="#aaa" stroke-width="1.1"/></svg>
<div class="t" style="left:1625px;top:1058.09px;font-size:11px;color:#e6e6e6;">UV Maps</div>
<div class="b" style="left:1603px;top:1077px;width:277px;height:25px;background:#3d3d3d;border-radius:4px 0 0 4px"></div>
<svg style="left:1613px;top:1084px;" width="8" height="11" viewBox="0 0 8 11"><path d="M1.5 1 L6 5.5 L1.5 10" fill="none" stroke="#aaa" stroke-width="1.1"/></svg>
<div class="t" style="left:1625px;top:1085.09px;font-size:11px;color:#e6e6e6;">Color Attributes</div>
<div class="b" style="left:1603px;top:1104px;width:277px;height:25px;background:#3d3d3d;border-radius:4px 0 0 4px"></div>
<svg style="left:1613px;top:1111px;" width="8" height="11" viewBox="0 0 8 11"><path d="M1.5 1 L6 5.5 L1.5 10" fill="none" stroke="#aaa" stroke-width="1.1"/></svg>
<div class="t" style="left:1625px;top:1112.09px;font-size:11px;color:#e6e6e6;">Face Maps</div>
<div class="b" style="left:1603px;top:1131px;width:277px;height:25px;background:#3d3d3d;border-radius:4px 0 0 4px"></div>
<svg style="left:1613px;top:1138px;" width="8" height="11" viewBox="0 0 8 11"><path d="M1.5 1 L6 5.5 L1.5 10" fill="none" stroke="#aaa" stroke-width="1.1"/></svg>
<div class="t" style="left:1625px;top:1139.09px;font-size:11px;color:#e6e6e6;">Attributes</div>
<div class="b" style="left:1603px;top:1158px;width:277px;height:25px;background:#3d3d3d;border-radius:4px 0 0 4px"></div>
<svg style="left:1613px;top:1165px;" width="8" height="11" viewBox="0 0 8 11"><path d="M1.5 1 L6 5.5 L1.5 10" fill="none" stroke="#aaa" stroke-width="1.1"/></svg>
<div class="t" style="left:1625px;top:1166.09px;font-size:11px;color:#e6e6e6;">Normals</div>
<div class="b" style="left:1603px;top:1185px;width:277px;height:25px;background:#3d3d3d;border-radius:4px 0 0 4px"></div>
<svg style="left:1613px;top:1192px;" width="8" height="11" viewBox="0 0 8 11"><path d="M1.5 1 L6 5.5 L1.5 10" fill="none" stroke="#aaa" stroke-width="1.1"/></svg>
<div class="t" style="left:1625px;top:1193.09px;font-size:11px;color:#e6e6e6;">Texture Space</div>
<div class="b" style="left:1603px;top:1212px;width:277px;height:25px;background:#3d3d3d;border-radius:4px 0 0 4px"></div>
<svg style="left:1613px;top:1219px;" width="8" height="11" viewBox="0 0 8 11"><path d="M1.5 1 L6 5.5 L1.5 10" fill="none" stroke="#aaa" stroke-width="1.1"/></svg>
<div class="t" style="left:1625px;top:1220.09px;font-size:11px;color:#e6e6e6;">Remesh</div>
<div class="b" style="left:1603px;top:1239px;width:277px;height:25px;background:#3d3d3d;border-radius:4px 0 0 4px"></div>
<svg style="left:1613px;top:1246px;" width="8" height="11" viewBox="0 0 8 11"><path d="M1.5 1 L6 5.5 L1.5 10" fill="none" stroke="#aaa" stroke-width="1.1"/></svg>
<div class="t" style="left:1625px;top:1247.09px;font-size:11px;color:#e6e6e6;">Geometry Data</div>
<div class="b" style="left:1603px;top:1266px;width:277px;height:25px;background:#3d3d3d;border-radius:4px 0 0 4px"></div>
<svg style="left:1613px;top:1273px;" width="8" height="11" viewBox="0 0 8 11"><path d="M1.5 1 L6 5.5 L1.5 10" fill="none" stroke="#aaa" stroke-width="1.1"/></svg>
<div class="t" style="left:1625px;top:1274.09px;font-size:11px;color:#e6e6e6;">Custom Properties</div>
<svg style="left:1573px;top:716px;" width="17" height="18" viewBox="0 0 17 18"><path d="M4 2 V7 M3 9 H6 V15 H3Z" stroke="#ddd" fill="#ddd" stroke-width="1"/><path d="M12 2 V6 M10 3 A3 3 0 0 0 14 3 M12 6 V16" stroke="#ddd" stroke-width="2" fill="none"/></svg>
<svg style="left:1573px;top:754px;" width="17" height="16" viewBox="0 0 17 16"><rect x="2" y="5" width="13" height="9" fill="none" stroke="#ddd" stroke-width="1.5"/><rect x="5" y="2" width="5" height="3" fill="#ddd"/><path d="M4 8 H9 M4 11 H9" stroke="#ddd"/><rect x="11" y="7" width="2" height="5" fill="#ddd"/></svg>
<svg style="left:1573px;top:782px;" width="17" height="16" viewBox="0 0 17 16"><rect x="2" y="2" width="13" height="4" fill="#ddd"/><rect x="4" y="7" width="9" height="8" fill="none" stroke="#ddd" stroke-width="1.5"/><path d="M5 14 L8 10 L10 12 L12 10 V14Z" fill="#ddd"/></svg>
<svg style="left:1573px;top:810px;" width="17" height="17" viewBox="0 0 17 17"><rect x="6" y="2" width="9" height="9" fill="none" stroke="#ddd" stroke-width="1.2"/><path d="M4 4 V13 H13 M2 6 V15 H11" fill="none" stroke="#ddd" stroke-width="1"/><path d="M7 10 L10 5 L12 8 L14 6 V10Z" fill="#ddd"/></svg>
<svg style="left:1573px;top:838px;" width="17" height="17" viewBox="0 0 17 17"><path d="M6 3 L10 11 H2Z" fill="#ddd"/><circle cx="13" cy="4" r="2" fill="#ddd"/><circle cx="11" cy="12" r="3.5" fill="#1d1d1d" stroke="#ddd" stroke-width="1.2"/></svg>
<svg style="left:1573px;top:866px;" width="17" height="17" viewBox="0 0 17 17"><circle cx="8.5" cy="8.5" r="6" fill="#c0506a"/><path d="M5 6 Q8 4 9 7 Q7 10 10 12" fill="none" stroke="#4a2030" stroke-width="1.4"/><path d="M2 14 L5 11 M12 3 L15 1" stroke="#c0506a" stroke-width="1.2"/></svg>
<svg style="left:1573px;top:903px;" width="17" height="16" viewBox="0 0 17 16"><rect x="2" y="2" width="13" height="3" fill="none" stroke="#ddd" stroke-width="1.4"/><rect x="3" y="6" width="11" height="8" fill="none" stroke="#ddd" stroke-width="1.5"/><rect x="7" y="8" width="3" height="1.5" fill="#ddd"/></svg>
<svg style="left:1573px;top:938px;" width="17" height="17" viewBox="0 0 17 17"><path d="M2 5 V2 H5 M12 2 H15 V5 M15 12 V15 H12 M5 15 H2 V12" stroke="#b07c4c" stroke-width="1" fill="none"/><rect x="4" y="4" width="9" height="9" fill="#e0955a"/></svg>
<svg style="left:1573px;top:966px;" width="17" height="17" viewBox="0 0 17 17"><path d="M3 14 L9 8 M8 4 A4 4 0 1 0 13 9" stroke="#6f95d6" stroke-width="3" fill="none" stroke-linecap="round"/></svg>
<svg style="left:1573px;top:994px;" width="17" height="17" viewBox="0 0 17 17"><circle cx="4" cy="4" r="2.5" fill="#7a9ad8"/><path d="M4 4 H14 M4 4 V14 M4 4 L13 13" stroke="#7a9ad8" stroke-width="1.3"/><circle cx="13" cy="13" r="2" fill="#7a9ad8"/><circle cx="4" cy="14" r="1.5" fill="#7a9ad8"/></svg>
<svg style="left:1573px;top:1022px;" width="17" height="17" viewBox="0 0 17 17"><circle cx="8" cy="9" r="3" fill="#7a9ad8"/><path d="M13 12 A6 6 0 1 1 9 3" fill="none" stroke="#7a9ad8" stroke-width="1.5"/><circle cx="13" cy="4" r="1.6" fill="#7a9ad8"/></svg>
<svg style="left:1573px;top:1050px;" width="17" height="17" viewBox="0 0 17 17"><circle cx="7" cy="10" r="4.5" fill="none" stroke="#7a9ad8" stroke-width="1.6"/><circle cx="7" cy="10" r="1.6" fill="#7a9ad8"/><path d="M4 6 L12 2 L15 5 L10 13" fill="none" stroke="#7a9ad8" stroke-width="1.4"/></svg>
<svg style="left:1573px;top:1078px;" width="17" height="17" viewBox="0 0 17 17"><path d="M3 3 H14 L8.5 14Z" fill="none" stroke="#4fc29a" stroke-width="1.4"/><rect x="1" y="1" width="4" height="4" fill="#303030" stroke="#4fc29a" stroke-width="1.2"/><rect x="12" y="1" width="4" height="4" fill="#303030" stroke="#4fc29a" stroke-width="1.2"/><rect x="6.5" y="12" width="4" height="4" fill="#303030" stroke="#4fc29a" stroke-width="1.2"/></svg>
<svg style="left:1573px;top:1106px;" width="17" height="17" viewBox="0 0 17 17"><circle cx="8.5" cy="8.5" r="6.5" fill="#c06070"/><path d="M8.5 8.5 H15 A6.5 6.5 0 0 1 8.5 15Z M8.5 8.5 H2 A6.5 6.5 0 0 1 8.5 2Z" fill="#3a1a20"/></svg>
<svg style="left:1573px;top:1142px;" width="17" height="17" viewBox="0 0 17 17"><rect x="2" y="2" width="13" height="13" fill="#7a3040"/><g fill="#d07080"><rect x="2" y="2" width="3.25" height="3.25"/><rect x="8.5" y="2" width="3.25" height="3.25"/><rect x="5.25" y="5.25" width="3.25" height="3.25"/><rect x="11.75" y="5.25" width="3.25" height="3.25"/><rect x="2" y="8.5" width="3.25" height="3.25"/><rect x="8.5" y="8.5" width="3.25" height="3.25"/><rect x="5.25" y="11.75" width="3.25" height="3.25"/><rect x="11.75" y="11.75" width="3.25" height="3.25"/></g></svg>
<svg style="left:1470px;top:560px;" width="90" height="110" viewBox="0 0 90 110">
<path d="M44.3 17 V49.3 H24.3" fill="none" stroke="#5d8fcf" stroke-width="2"/>
<path d="M44.3 49.3 H24.3" stroke="#a8cc3a" stroke-width="2.2"/>
<circle cx="16.8" cy="50.5" r="8" fill="#8a4848" stroke="#c85050" stroke-width="1"/>
<circle cx="24.3" cy="47.5" r="8.5" fill="#7ad12a"/>
<text x="24.3" y="51.8" font-size="11" font-family="Liberation Sans" text-anchor="middle" fill="#103010">Y</text>
<circle cx="62.9" cy="51.6" r="8" fill="#5a6a4a" stroke="#6faa50" stroke-width="1"/>
<circle cx="68.8" cy="47.5" r="8.5" fill="#b84a58" stroke="#d05a66" stroke-width="1"/>
<circle cx="44.3" cy="16.8" r="8.5" fill="#4a86d8"/>
<text x="44.3" y="21" font-size="11" font-weight="bold" font-family="Liberation Sans" text-anchor="middle" fill="#102050">Z</text>
<circle cx="44" cy="80.6" r="8" fill="#3e5f8a" stroke="#5a8ad0" stroke-width="1"/>
</svg>
<svg style="left:1556px;top:574px;" width="9" height="13" viewBox="0 0 9 13"><path d="M7 2 L2 6.5 L7 11" fill="none" stroke="#aaa" stroke-width="1.3"/></svg>
<div class="b" style="left:1529.7px;top:651px;width:24px;height:24px;border-radius:50%;background:#373737"></div>
<div class="b" style="left:1529.7px;top:680.5px;width:24px;height:24px;border-radius:50%;background:#373737"></div>
<div class="b" style="left:1529.7px;top:710.6px;width:24px;height:24px;border-radius:50%;background:#373737"></div>
<div class="b" style="left:1529.7px;top:741.3px;width:24px;height:24px;border-radius:50%;background:#373737"></div>
<svg style="left:1530px;top:651px;" width="24" height="24" viewBox="0 0 24 24"><circle cx="13.5" cy="10" r="5.5" fill="none" stroke="#e6e6e6" stroke-width="1.8"/><path d="M13.5 7 V13 M10.5 10 H16.5" stroke="#e6e6e6" stroke-width="1.3"/><path d="M9.5 14 L5 18.5" stroke="#e6e6e6" stroke-width="2.4" stroke-linecap="round"/></svg>
<svg style="left:1530px;top:680.5px;" width="24" height="24" viewBox="0 0 24 24"><path d="M7 12 V7.5 A1 1 0 0 1 9 7.5 V11 V5.5 A1 1 0 0 1 11 5.5 V11 V5 A1 1 0 0 1 13 5 V11 V6 A1 1 0 0 1 15 6 V11 V9 A1 1 0 0 1 17 9 V14 Q17 19 12 19 Q9 19 7 16 L5 13 Q5 11.5 7 12Z" fill="#e6e6e6"/></svg>
<svg style="left:1530px;top:710.6px;" width="24" height="24" viewBox="0 0 24 24"><circle cx="9" cy="8" r="3.3" fill="#e6e6e6"/><circle cx="15" cy="8" r="3.3" fill="#e6e6e6"/><circle cx="9" cy="8" r="1" fill="#373737"/><circle cx="15" cy="8" r="1" fill="#373737"/><rect x="8" y="12" width="8" height="6" fill="#e6e6e6"/><path d="M16 15 L20 12 V18Z" fill="#e6e6e6"/><rect x="5" y="13" width="2" height="2" fill="#e6e6e6"/></svg>
<svg style="left:1530px;top:741.3px;" width="24" height="24" viewBox="0 0 24 24"><path d="M7 5 H17 L19 19 H5Z M6 10 H18 M5.5 14.5 H18.5 M10.3 5 L9.7 19 M13.7 5 L14.3 19" fill="none" stroke="#e6e6e6" stroke-width="1.4"/></svg>
</body></html>
